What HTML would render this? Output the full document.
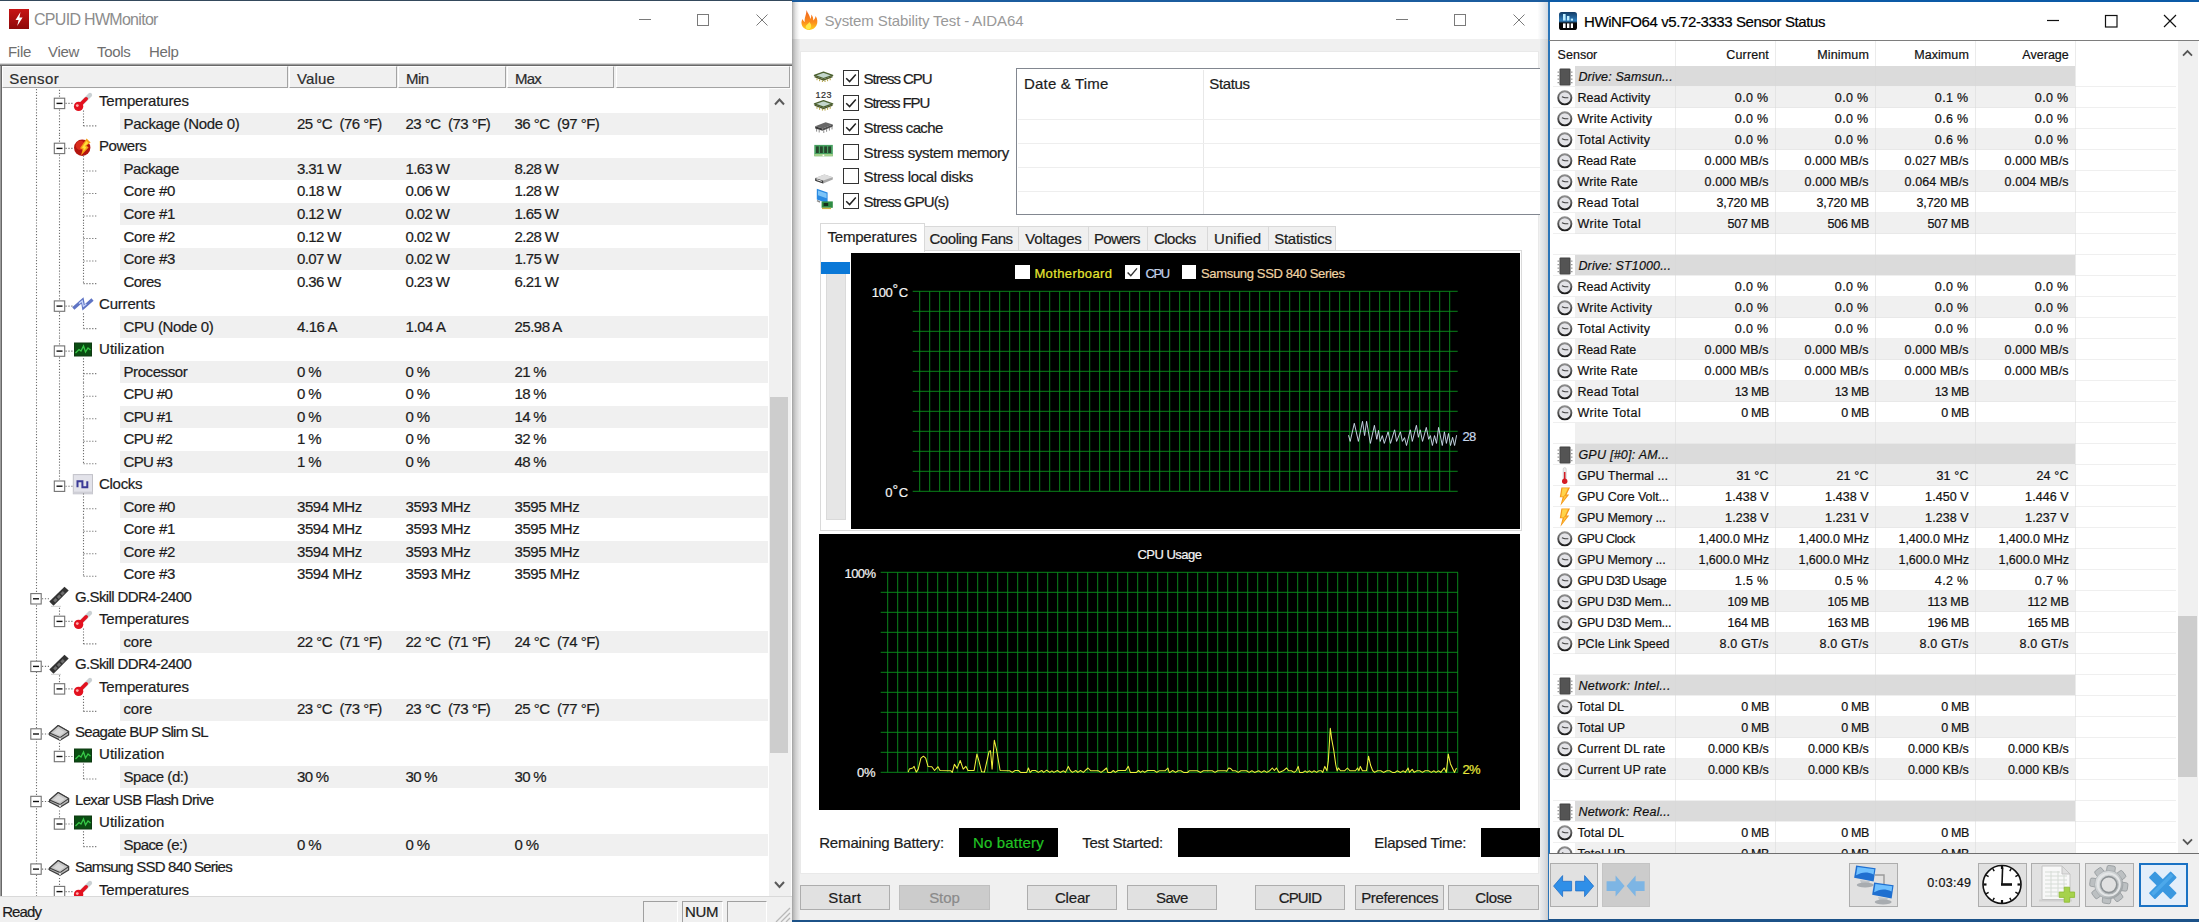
<!DOCTYPE html><html><head><meta charset="utf-8"><title>Monitoring</title><style>
*{box-sizing:border-box}
html,body{margin:0;padding:0}
body{width:2199px;height:922px;position:relative;overflow:hidden;background:#fff;font-family:"Liberation Sans",sans-serif;}
.a{position:absolute}
.t{position:absolute;white-space:nowrap;line-height:1;-webkit-text-stroke:0.2px}
.seg{font-size:15px;letter-spacing:-0.3px;color:#1c1c1c}
.hw{font-size:12.5px;color:#111}
.r{text-align:right}
svg{position:absolute;overflow:visible}
</style></head><body>
<div class="a" id="hwm" style="left:0;top:0;width:792px;height:922px;background:#fff;overflow:hidden">
<div class="a" style="left:0px;top:0px;width:792px;height:1px;background:#34495c;"></div>
<svg style="left:9px;top:9px" width="20" height="20" viewBox="0 0 20 20"><defs><linearGradient id="hmi" x1="0" y1="0" x2="0" y2="1"><stop offset="0" stop-color="#c81414"/><stop offset="1" stop-color="#8e0808"/></linearGradient></defs><rect width="20" height="20" fill="url(#hmi)"/><path d="M11.5 3 L6.5 11 H9.6 L8.2 17 L13.6 8.6 H10.4 Z" fill="#fff"/></svg>
<div class="t seg" style="left:34px;top:11.76px;font-size:16px;color:#8c8c8c;letter-spacing:-0.7px;-webkit-text-stroke:0">CPUID HWMonitor</div>
<svg style="left:0;top:0" width="792" height="40"><g stroke="#7a7a7a" stroke-width="1" fill="none"><path d="M639 19.5H651"/><rect x="697.5" y="14.5" width="11" height="11"/><path d="M756.5 14.5L767.5 25.5M767.5 14.5L756.5 25.5"/></g></svg>
<div class="t seg" style="left:8px;top:43.60px;font-size:15px;color:#6e6e6e;-webkit-text-stroke:0">File</div>
<div class="t seg" style="left:48px;top:43.60px;font-size:15px;color:#6e6e6e;-webkit-text-stroke:0">View</div>
<div class="t seg" style="left:97px;top:43.60px;font-size:15px;color:#6e6e6e;-webkit-text-stroke:0">Tools</div>
<div class="t seg" style="left:149px;top:43.60px;font-size:15px;color:#6e6e6e;-webkit-text-stroke:0">Help</div>
<div class="a" style="left:0px;top:63px;width:792px;height:1px;background:#d8d8d8;"></div>
<div class="a" style="left:0px;top:64px;width:792px;height:1px;background:#9c9c9c;"></div>
<div class="a" style="left:0px;top:65px;width:792px;height:1px;background:#686868;"></div>
<div class="a" style="left:0px;top:66px;width:1px;height:860px;background:#9c9c9c;"></div>
<div class="a" style="left:1px;top:66px;width:1px;height:860px;background:#686868;"></div>
<div class="a" style="left:2px;top:66px;width:788px;height:22px;background:#f0f0f0;"></div>
<div class="a" style="left:2px;top:66px;width:285.5px;height:22px;background:#f0f0f0;border-top:1px solid #fff;border-left:1px solid #fff;border-right:1px solid #a3a3a3;border-bottom:1px solid #a3a3a3"></div>
<div class="a" style="left:288.5px;top:66px;width:108.0px;height:22px;background:#f0f0f0;border-top:1px solid #fff;border-left:1px solid #fff;border-right:1px solid #a3a3a3;border-bottom:1px solid #a3a3a3"></div>
<div class="a" style="left:398px;top:66px;width:107.5px;height:22px;background:#f0f0f0;border-top:1px solid #fff;border-left:1px solid #fff;border-right:1px solid #a3a3a3;border-bottom:1px solid #a3a3a3"></div>
<div class="a" style="left:507px;top:66px;width:107px;height:22px;background:#f0f0f0;border-top:1px solid #fff;border-left:1px solid #fff;border-right:1px solid #a3a3a3;border-bottom:1px solid #a3a3a3"></div>
<div class="a" style="left:615.5px;top:66px;width:174.5px;height:22px;background:#f0f0f0;border-top:1px solid #fff;border-left:1px solid #fff;border-right:1px solid #a3a3a3;border-bottom:1px solid #a3a3a3"></div>
<div class="a" style="left:2px;top:88px;width:788px;height:1px;background:#fdfdfd;"></div>
<div class="t " style="left:9.3px;top:70.90px;font-size:15px;color:#2c2c2c;letter-spacing:0.361px">Sensor</div>
<div class="t " style="left:297px;top:70.90px;font-size:15px;color:#2c2c2c;letter-spacing:0.129px">Value</div>
<div class="t " style="left:406px;top:70.90px;font-size:15px;color:#2c2c2c;letter-spacing:-0.491px">Min</div>
<div class="t " style="left:515px;top:70.90px;font-size:15px;color:#2c2c2c;letter-spacing:-0.747px">Max</div>
<div class="a" style="left:769.2px;top:89px;width:21.5px;height:808px;background:#f0f0f0;"></div>
<div class="a" style="left:769.5px;top:396.7px;width:18.9px;height:356.3px;background:#cdcdcd;"></div>
<svg style="left:770px;top:89px" width="20" height="808"><g fill="none" stroke="#5a5a5a" stroke-width="2"><path d="M5 15.5L9.5 10.5L14 15.5"/><path d="M5 793L9.5 798L14 793"/></g></svg>
<div class="a" style="left:2px;top:89px;width:768px;height:808px;overflow:hidden">
<svg style="left:71px;top:2.5px" width="20" height="20" viewBox="0 0 20 20"><g><line x1="6" y1="14" x2="17" y2="3" stroke="#c9cfd2" stroke-width="4.2" stroke-linecap="round"/><line x1="6" y1="14" x2="13.2" y2="6.8" stroke="#e3111f" stroke-width="3.6" stroke-linecap="round"/><circle cx="5.6" cy="14.4" r="4.7" fill="#e3111f"/><circle cx="4.3" cy="13.6" r="1.4" fill="#ffb0b0"/></g></svg>
<div class="t " style="left:97px;top:4.40px;font-size:15px;color:#1c1c1c;letter-spacing:-0.152px">Temperatures</div>
<svg style="left:71px;top:47.5px" width="20" height="20" viewBox="0 0 20 20"><g><circle cx="9.2" cy="10.8" r="8.2" fill="#b3140e"/><circle cx="7.4" cy="8.4" r="4.6" fill="#e0301e" opacity=".85"/><path d="M13.6 1.4L17.6 5.4L13.4 8.6L15.6 10.4L8 18.4L9.6 12.6L7 11.2Z" fill="#f6a21a"/><path d="M13.4 4L15.4 6L11.8 9L13.4 10.4L10 14.6L10.8 11.6L9 10.4Z" fill="#ffe23a"/></g></svg>
<div class="t " style="left:97px;top:49.44px;font-size:15px;color:#1c1c1c;letter-spacing:-0.453px">Powers</div>
<svg style="left:71px;top:205.2px" width="20" height="20" viewBox="0 0 20 20"><g fill="none" stroke-linejoin="miter"><path d="M0.3 14.6L9.4 6.4L10.6 13.4L19.5 5.6" stroke="#5f74c4" stroke-width="3.3"/><path d="M6 9.6L9.2 7L10.4 12.4L13.4 10" stroke="#c6d4fa" stroke-width="1.3"/></g></svg>
<div class="t " style="left:97px;top:207.08px;font-size:15px;color:#1c1c1c;letter-spacing:-0.190px">Currents</div>
<svg style="left:71px;top:250.2px" width="20" height="20" viewBox="0 0 20 20"><g><rect x="1" y="3.5" width="18" height="14" fill="#0e3a12"/><rect x="2" y="4.5" width="16" height="12" fill="#0a4d12"/><path d="M2.5 14L6 10.5L8 12L10.5 7L12.5 13L15 9L17.5 11" fill="none" stroke="#38c848" stroke-width="1.3"/></g></svg>
<div class="t " style="left:97px;top:252.12px;font-size:15px;color:#1c1c1c;letter-spacing:0.043px">Utilization</div>
<svg style="left:71px;top:385.3px" width="20" height="20" viewBox="0 0 20 20"><g><rect x="0.3" y="0.6" width="19.2" height="19.2" fill="#e3e3ea" stroke="#c2c2c8"/><rect x="0.3" y="17.6" width="19.2" height="2.2" fill="#cfcfd6"/><path d="M4.5 13.2V7.2H9.4V13.2H14.3V7.2" fill="none" stroke="#3b3a96" stroke-width="2"/></g></svg>
<div class="t " style="left:97px;top:387.24px;font-size:15px;color:#1c1c1c;letter-spacing:-0.285px">Clocks</div>
<svg style="left:47px;top:497.4px" width="21" height="20" viewBox="0 0 21 20"><g><path d="M0.3 15.6L15.5 0.8L19.7 4.6L4.5 19.8Z" fill="#333"/><path d="M4.2 14.4L6.6 12L8.6 14L6.2 16.4ZM7.8 10.9L10.2 8.5L12.2 10.5L9.8 12.9ZM11.4 7.4L13.8 5L15.8 7L13.4 9.4Z" fill="#6e6e6e"/><path d="M2 20.3H12" stroke="#cfcfcf" stroke-width="1"/></g></svg>
<div class="t " style="left:73px;top:499.84px;font-size:15px;color:#1c1c1c;letter-spacing:-0.624px">G.Skill DDR4-2400</div>
<svg style="left:71px;top:520.5px" width="20" height="20" viewBox="0 0 20 20"><g><line x1="6" y1="14" x2="17" y2="3" stroke="#c9cfd2" stroke-width="4.2" stroke-linecap="round"/><line x1="6" y1="14" x2="13.2" y2="6.8" stroke="#e3111f" stroke-width="3.6" stroke-linecap="round"/><circle cx="5.6" cy="14.4" r="4.7" fill="#e3111f"/><circle cx="4.3" cy="13.6" r="1.4" fill="#ffb0b0"/></g></svg>
<div class="t " style="left:97px;top:522.36px;font-size:15px;color:#1c1c1c;letter-spacing:-0.152px">Temperatures</div>
<svg style="left:47px;top:565.0px" width="21" height="20" viewBox="0 0 21 20"><g><path d="M0.3 15.6L15.5 0.8L19.7 4.6L4.5 19.8Z" fill="#333"/><path d="M4.2 14.4L6.6 12L8.6 14L6.2 16.4ZM7.8 10.9L10.2 8.5L12.2 10.5L9.8 12.9ZM11.4 7.4L13.8 5L15.8 7L13.4 9.4Z" fill="#6e6e6e"/><path d="M2 20.3H12" stroke="#cfcfcf" stroke-width="1"/></g></svg>
<div class="t " style="left:73px;top:567.40px;font-size:15px;color:#1c1c1c;letter-spacing:-0.624px">G.Skill DDR4-2400</div>
<svg style="left:71px;top:588.0px" width="20" height="20" viewBox="0 0 20 20"><g><line x1="6" y1="14" x2="17" y2="3" stroke="#c9cfd2" stroke-width="4.2" stroke-linecap="round"/><line x1="6" y1="14" x2="13.2" y2="6.8" stroke="#e3111f" stroke-width="3.6" stroke-linecap="round"/><circle cx="5.6" cy="14.4" r="4.7" fill="#e3111f"/><circle cx="4.3" cy="13.6" r="1.4" fill="#ffb0b0"/></g></svg>
<div class="t " style="left:97px;top:589.92px;font-size:15px;color:#1c1c1c;letter-spacing:-0.152px">Temperatures</div>
<svg style="left:47px;top:632.6px" width="21" height="20" viewBox="0 0 21 20"><g stroke-linejoin="round"><path d="M0.6 11.1L9.1 3.6L19.6 9.6V13L11 18.2L0.6 13Z" fill="#b9b9b9" stroke="#3c3c3c" stroke-width="1.3"/><path d="M0.6 11.1L9.1 3.6L19.6 9.6L11 15.6Z" fill="#c6c6c6" stroke="#3c3c3c" stroke-width="1.1"/><path d="M4.5 10.8L9.3 6.4L15.6 9.9L10.8 13.4Z" fill="#d9d9d9"/><path d="M11 15.8V18" stroke="#f4f4f4" stroke-width="1.4"/></g></svg>
<div class="t " style="left:73px;top:634.96px;font-size:15px;color:#1c1c1c;letter-spacing:-0.720px">Seagate BUP Slim SL</div>
<svg style="left:71px;top:655.6px" width="20" height="20" viewBox="0 0 20 20"><g><rect x="1" y="3.5" width="18" height="14" fill="#0e3a12"/><rect x="2" y="4.5" width="16" height="12" fill="#0a4d12"/><path d="M2.5 14L6 10.5L8 12L10.5 7L12.5 13L15 9L17.5 11" fill="none" stroke="#38c848" stroke-width="1.3"/></g></svg>
<div class="t " style="left:97px;top:657.48px;font-size:15px;color:#1c1c1c;letter-spacing:0.043px">Utilization</div>
<svg style="left:47px;top:700.1px" width="21" height="20" viewBox="0 0 21 20"><g stroke-linejoin="round"><path d="M0.6 11.1L9.1 3.6L19.6 9.6V13L11 18.2L0.6 13Z" fill="#b9b9b9" stroke="#3c3c3c" stroke-width="1.3"/><path d="M0.6 11.1L9.1 3.6L19.6 9.6L11 15.6Z" fill="#c6c6c6" stroke="#3c3c3c" stroke-width="1.1"/><path d="M4.5 10.8L9.3 6.4L15.6 9.9L10.8 13.4Z" fill="#d9d9d9"/><path d="M11 15.8V18" stroke="#f4f4f4" stroke-width="1.4"/></g></svg>
<div class="t " style="left:73px;top:702.52px;font-size:15px;color:#1c1c1c;letter-spacing:-0.674px">Lexar USB Flash Drive</div>
<svg style="left:71px;top:723.1px" width="20" height="20" viewBox="0 0 20 20"><g><rect x="1" y="3.5" width="18" height="14" fill="#0e3a12"/><rect x="2" y="4.5" width="16" height="12" fill="#0a4d12"/><path d="M2.5 14L6 10.5L8 12L10.5 7L12.5 13L15 9L17.5 11" fill="none" stroke="#38c848" stroke-width="1.3"/></g></svg>
<div class="t " style="left:97px;top:725.04px;font-size:15px;color:#1c1c1c;letter-spacing:0.043px">Utilization</div>
<svg style="left:47px;top:767.7px" width="21" height="20" viewBox="0 0 21 20"><g stroke-linejoin="round"><path d="M0.6 11.1L9.1 3.6L19.6 9.6V13L11 18.2L0.6 13Z" fill="#b9b9b9" stroke="#3c3c3c" stroke-width="1.3"/><path d="M0.6 11.1L9.1 3.6L19.6 9.6L11 15.6Z" fill="#c6c6c6" stroke="#3c3c3c" stroke-width="1.1"/><path d="M4.5 10.8L9.3 6.4L15.6 9.9L10.8 13.4Z" fill="#d9d9d9"/><path d="M11 15.8V18" stroke="#f4f4f4" stroke-width="1.4"/></g></svg>
<div class="t " style="left:73px;top:770.08px;font-size:15px;color:#1c1c1c;letter-spacing:-0.790px">Samsung SSD 840 Series</div>
<svg style="left:71px;top:790.7px" width="20" height="20" viewBox="0 0 20 20"><g><line x1="6" y1="14" x2="17" y2="3" stroke="#c9cfd2" stroke-width="4.2" stroke-linecap="round"/><line x1="6" y1="14" x2="13.2" y2="6.8" stroke="#e3111f" stroke-width="3.6" stroke-linecap="round"/><circle cx="5.6" cy="14.4" r="4.7" fill="#e3111f"/><circle cx="4.3" cy="13.6" r="1.4" fill="#ffb0b0"/></g></svg>
<div class="t " style="left:97px;top:792.60px;font-size:15px;color:#1c1c1c;letter-spacing:-0.152px">Temperatures</div>
<div class="a" style="left:118px;top:24.1px;width:648px;height:22px;background:#f0f0f0;"></div>
<div class="a" style="left:118px;top:69.2px;width:648px;height:22px;background:#f0f0f0;"></div>
<div class="a" style="left:118px;top:114.2px;width:648px;height:22px;background:#f0f0f0;"></div>
<div class="a" style="left:118px;top:159.2px;width:648px;height:22px;background:#f0f0f0;"></div>
<div class="a" style="left:118px;top:226.8px;width:648px;height:22px;background:#f0f0f0;"></div>
<div class="a" style="left:118px;top:271.8px;width:648px;height:22px;background:#f0f0f0;"></div>
<div class="a" style="left:118px;top:316.9px;width:648px;height:22px;background:#f0f0f0;"></div>
<div class="a" style="left:118px;top:361.9px;width:648px;height:22px;background:#f0f0f0;"></div>
<div class="a" style="left:118px;top:407.0px;width:648px;height:22px;background:#f0f0f0;"></div>
<div class="a" style="left:118px;top:452.0px;width:648px;height:22px;background:#f0f0f0;"></div>
<div class="a" style="left:118px;top:542.1px;width:648px;height:22px;background:#f0f0f0;"></div>
<div class="a" style="left:118px;top:609.6px;width:648px;height:22px;background:#f0f0f0;"></div>
<div class="a" style="left:118px;top:677.2px;width:648px;height:22px;background:#f0f0f0;"></div>
<div class="a" style="left:118px;top:744.8px;width:648px;height:22px;background:#f0f0f0;"></div>
<div class="t " style="left:121.5px;top:26.92px;font-size:15px;color:#1c1c1c;letter-spacing:-0.307px">Package (Node 0)</div>
<div class="t " style="left:295px;top:26.92px;font-size:15px;color:#1c1c1c;letter-spacing:-0.517px">25 °C&nbsp; (76 °F)</div>
<div class="t " style="left:403.5px;top:26.92px;font-size:15px;color:#1c1c1c;letter-spacing:-0.517px">23 °C&nbsp; (73 °F)</div>
<div class="t " style="left:512.5px;top:26.92px;font-size:15px;color:#1c1c1c;letter-spacing:-0.517px">36 °C&nbsp; (97 °F)</div>
<div class="t " style="left:121.5px;top:71.96px;font-size:15px;color:#1c1c1c;letter-spacing:-0.440px">Package</div>
<div class="t " style="left:295px;top:71.96px;font-size:15px;color:#1c1c1c;letter-spacing:-0.637px">3.31 W</div>
<div class="t " style="left:403.5px;top:71.96px;font-size:15px;color:#1c1c1c;letter-spacing:-0.637px">1.63 W</div>
<div class="t " style="left:512.5px;top:71.96px;font-size:15px;color:#1c1c1c;letter-spacing:-0.637px">8.28 W</div>
<div class="t " style="left:121.5px;top:94.48px;font-size:15px;color:#1c1c1c;letter-spacing:-0.239px">Core #0</div>
<div class="t " style="left:295px;top:94.48px;font-size:15px;color:#1c1c1c;letter-spacing:-0.637px">0.18 W</div>
<div class="t " style="left:403.5px;top:94.48px;font-size:15px;color:#1c1c1c;letter-spacing:-0.637px">0.06 W</div>
<div class="t " style="left:512.5px;top:94.48px;font-size:15px;color:#1c1c1c;letter-spacing:-0.637px">1.28 W</div>
<div class="t " style="left:121.5px;top:117.00px;font-size:15px;color:#1c1c1c;letter-spacing:-0.239px">Core #1</div>
<div class="t " style="left:295px;top:117.00px;font-size:15px;color:#1c1c1c;letter-spacing:-0.637px">0.12 W</div>
<div class="t " style="left:403.5px;top:117.00px;font-size:15px;color:#1c1c1c;letter-spacing:-0.637px">0.02 W</div>
<div class="t " style="left:512.5px;top:117.00px;font-size:15px;color:#1c1c1c;letter-spacing:-0.637px">1.65 W</div>
<div class="t " style="left:121.5px;top:139.52px;font-size:15px;color:#1c1c1c;letter-spacing:-0.239px">Core #2</div>
<div class="t " style="left:295px;top:139.52px;font-size:15px;color:#1c1c1c;letter-spacing:-0.637px">0.12 W</div>
<div class="t " style="left:403.5px;top:139.52px;font-size:15px;color:#1c1c1c;letter-spacing:-0.637px">0.02 W</div>
<div class="t " style="left:512.5px;top:139.52px;font-size:15px;color:#1c1c1c;letter-spacing:-0.637px">2.28 W</div>
<div class="t " style="left:121.5px;top:162.04px;font-size:15px;color:#1c1c1c;letter-spacing:-0.239px">Core #3</div>
<div class="t " style="left:295px;top:162.04px;font-size:15px;color:#1c1c1c;letter-spacing:-0.637px">0.07 W</div>
<div class="t " style="left:403.5px;top:162.04px;font-size:15px;color:#1c1c1c;letter-spacing:-0.637px">0.02 W</div>
<div class="t " style="left:512.5px;top:162.04px;font-size:15px;color:#1c1c1c;letter-spacing:-0.637px">1.75 W</div>
<div class="t " style="left:121.5px;top:184.56px;font-size:15px;color:#1c1c1c;letter-spacing:-0.583px">Cores</div>
<div class="t " style="left:295px;top:184.56px;font-size:15px;color:#1c1c1c;letter-spacing:-0.637px">0.36 W</div>
<div class="t " style="left:403.5px;top:184.56px;font-size:15px;color:#1c1c1c;letter-spacing:-0.637px">0.23 W</div>
<div class="t " style="left:512.5px;top:184.56px;font-size:15px;color:#1c1c1c;letter-spacing:-0.637px">6.21 W</div>
<div class="t " style="left:121.5px;top:229.60px;font-size:15px;color:#1c1c1c;letter-spacing:-0.359px">CPU (Node 0)</div>
<div class="t " style="left:295px;top:229.60px;font-size:15px;color:#1c1c1c;letter-spacing:-0.424px">4.16 A</div>
<div class="t " style="left:403.5px;top:229.60px;font-size:15px;color:#1c1c1c;letter-spacing:-0.424px">1.04 A</div>
<div class="t " style="left:512.5px;top:229.60px;font-size:15px;color:#1c1c1c;letter-spacing:-0.512px">25.98 A</div>
<div class="t " style="left:121.5px;top:274.64px;font-size:15px;color:#1c1c1c;letter-spacing:-0.425px">Processor</div>
<div class="t " style="left:295px;top:274.64px;font-size:15px;color:#1c1c1c;letter-spacing:-0.616px">0 %</div>
<div class="t " style="left:403.5px;top:274.64px;font-size:15px;color:#1c1c1c;letter-spacing:-0.616px">0 %</div>
<div class="t " style="left:512.5px;top:274.64px;font-size:15px;color:#1c1c1c;letter-spacing:-0.673px">21 %</div>
<div class="t " style="left:121.5px;top:297.16px;font-size:15px;color:#1c1c1c;letter-spacing:-0.637px">CPU #0</div>
<div class="t " style="left:295px;top:297.16px;font-size:15px;color:#1c1c1c;letter-spacing:-0.616px">0 %</div>
<div class="t " style="left:403.5px;top:297.16px;font-size:15px;color:#1c1c1c;letter-spacing:-0.616px">0 %</div>
<div class="t " style="left:512.5px;top:297.16px;font-size:15px;color:#1c1c1c;letter-spacing:-0.673px">18 %</div>
<div class="t " style="left:121.5px;top:319.68px;font-size:15px;color:#1c1c1c;letter-spacing:-0.637px">CPU #1</div>
<div class="t " style="left:295px;top:319.68px;font-size:15px;color:#1c1c1c;letter-spacing:-0.616px">0 %</div>
<div class="t " style="left:403.5px;top:319.68px;font-size:15px;color:#1c1c1c;letter-spacing:-0.616px">0 %</div>
<div class="t " style="left:512.5px;top:319.68px;font-size:15px;color:#1c1c1c;letter-spacing:-0.673px">14 %</div>
<div class="t " style="left:121.5px;top:342.20px;font-size:15px;color:#1c1c1c;letter-spacing:-0.637px">CPU #2</div>
<div class="t " style="left:295px;top:342.20px;font-size:15px;color:#1c1c1c;letter-spacing:-0.616px">1 %</div>
<div class="t " style="left:403.5px;top:342.20px;font-size:15px;color:#1c1c1c;letter-spacing:-0.616px">0 %</div>
<div class="t " style="left:512.5px;top:342.20px;font-size:15px;color:#1c1c1c;letter-spacing:-0.673px">32 %</div>
<div class="t " style="left:121.5px;top:364.72px;font-size:15px;color:#1c1c1c;letter-spacing:-0.637px">CPU #3</div>
<div class="t " style="left:295px;top:364.72px;font-size:15px;color:#1c1c1c;letter-spacing:-0.616px">1 %</div>
<div class="t " style="left:403.5px;top:364.72px;font-size:15px;color:#1c1c1c;letter-spacing:-0.616px">0 %</div>
<div class="t " style="left:512.5px;top:364.72px;font-size:15px;color:#1c1c1c;letter-spacing:-0.673px">48 %</div>
<div class="t " style="left:121.5px;top:409.76px;font-size:15px;color:#1c1c1c;letter-spacing:-0.239px">Core #0</div>
<div class="t " style="left:295px;top:409.76px;font-size:15px;color:#1c1c1c;letter-spacing:-0.446px">3594 MHz</div>
<div class="t " style="left:403.5px;top:409.76px;font-size:15px;color:#1c1c1c;letter-spacing:-0.446px">3593 MHz</div>
<div class="t " style="left:512.5px;top:409.76px;font-size:15px;color:#1c1c1c;letter-spacing:-0.446px">3595 MHz</div>
<div class="t " style="left:121.5px;top:432.28px;font-size:15px;color:#1c1c1c;letter-spacing:-0.239px">Core #1</div>
<div class="t " style="left:295px;top:432.28px;font-size:15px;color:#1c1c1c;letter-spacing:-0.446px">3594 MHz</div>
<div class="t " style="left:403.5px;top:432.28px;font-size:15px;color:#1c1c1c;letter-spacing:-0.446px">3593 MHz</div>
<div class="t " style="left:512.5px;top:432.28px;font-size:15px;color:#1c1c1c;letter-spacing:-0.446px">3595 MHz</div>
<div class="t " style="left:121.5px;top:454.80px;font-size:15px;color:#1c1c1c;letter-spacing:-0.239px">Core #2</div>
<div class="t " style="left:295px;top:454.80px;font-size:15px;color:#1c1c1c;letter-spacing:-0.446px">3594 MHz</div>
<div class="t " style="left:403.5px;top:454.80px;font-size:15px;color:#1c1c1c;letter-spacing:-0.446px">3593 MHz</div>
<div class="t " style="left:512.5px;top:454.80px;font-size:15px;color:#1c1c1c;letter-spacing:-0.446px">3595 MHz</div>
<div class="t " style="left:121.5px;top:477.32px;font-size:15px;color:#1c1c1c;letter-spacing:-0.239px">Core #3</div>
<div class="t " style="left:295px;top:477.32px;font-size:15px;color:#1c1c1c;letter-spacing:-0.446px">3594 MHz</div>
<div class="t " style="left:403.5px;top:477.32px;font-size:15px;color:#1c1c1c;letter-spacing:-0.446px">3593 MHz</div>
<div class="t " style="left:512.5px;top:477.32px;font-size:15px;color:#1c1c1c;letter-spacing:-0.446px">3595 MHz</div>
<div class="t " style="left:121.5px;top:544.88px;font-size:15px;color:#1c1c1c;letter-spacing:-0.146px">core</div>
<div class="t " style="left:295px;top:544.88px;font-size:15px;color:#1c1c1c;letter-spacing:-0.517px">22 °C&nbsp; (71 °F)</div>
<div class="t " style="left:403.5px;top:544.88px;font-size:15px;color:#1c1c1c;letter-spacing:-0.517px">22 °C&nbsp; (71 °F)</div>
<div class="t " style="left:512.5px;top:544.88px;font-size:15px;color:#1c1c1c;letter-spacing:-0.517px">24 °C&nbsp; (74 °F)</div>
<div class="t " style="left:121.5px;top:612.44px;font-size:15px;color:#1c1c1c;letter-spacing:-0.146px">core</div>
<div class="t " style="left:295px;top:612.44px;font-size:15px;color:#1c1c1c;letter-spacing:-0.517px">23 °C&nbsp; (73 °F)</div>
<div class="t " style="left:403.5px;top:612.44px;font-size:15px;color:#1c1c1c;letter-spacing:-0.517px">23 °C&nbsp; (73 °F)</div>
<div class="t " style="left:512.5px;top:612.44px;font-size:15px;color:#1c1c1c;letter-spacing:-0.517px">25 °C&nbsp; (77 °F)</div>
<div class="t " style="left:121.5px;top:680.00px;font-size:15px;color:#1c1c1c;letter-spacing:-0.471px">Space (d:)</div>
<div class="t " style="left:295px;top:680.00px;font-size:15px;color:#1c1c1c;letter-spacing:-0.673px">30 %</div>
<div class="t " style="left:403.5px;top:680.00px;font-size:15px;color:#1c1c1c;letter-spacing:-0.673px">30 %</div>
<div class="t " style="left:512.5px;top:680.00px;font-size:15px;color:#1c1c1c;letter-spacing:-0.673px">30 %</div>
<div class="t " style="left:121.5px;top:747.56px;font-size:15px;color:#1c1c1c;letter-spacing:-0.581px">Space (e:)</div>
<div class="t " style="left:295px;top:747.56px;font-size:15px;color:#1c1c1c;letter-spacing:-0.616px">0 %</div>
<div class="t " style="left:403.5px;top:747.56px;font-size:15px;color:#1c1c1c;letter-spacing:-0.616px">0 %</div>
<div class="t " style="left:512.5px;top:747.56px;font-size:15px;color:#1c1c1c;letter-spacing:-0.616px">0 %</div>
<svg style="left:0;top:0" width="768" height="808"><path d="M34.5 0V808" stroke="#707070" stroke-width="1.1" stroke-dasharray="1.2 1.7" fill="none"/><path d="M57.5 0.8V9.0" stroke="#707070" stroke-width="1.1" stroke-dasharray="1.2 1.7" fill="none"/><path d="M63.5 14.4H71" stroke="#707070" stroke-width="1.1" stroke-dasharray="1.2 1.7" fill="none"/><rect x="52.3" y="9.2" width="10.4" height="10.4" fill="#fff" stroke="#727272" stroke-width="1.1"/><path d="M54.5 14.4h6" stroke="#111" stroke-width="1.4"/><path d="M57.5 20.5V45.8" stroke="#707070" stroke-width="1.1" stroke-dasharray="1.2 1.7" fill="none"/><path d="M81.5 21.5V36.9" stroke="#707070" stroke-width="1.1" stroke-dasharray="1.2 1.7" fill="none"/><path d="M81.5 36.9H95" stroke="#707070" stroke-width="1.1" stroke-dasharray="1.2 1.7" fill="none"/><path d="M57.5 45.8V54.0" stroke="#707070" stroke-width="1.1" stroke-dasharray="1.2 1.7" fill="none"/><path d="M63.5 59.4H71" stroke="#707070" stroke-width="1.1" stroke-dasharray="1.2 1.7" fill="none"/><rect x="52.3" y="54.2" width="10.4" height="10.4" fill="#fff" stroke="#727272" stroke-width="1.1"/><path d="M54.5 59.4h6" stroke="#111" stroke-width="1.4"/><path d="M57.5 65.5V203.4" stroke="#707070" stroke-width="1.1" stroke-dasharray="1.2 1.7" fill="none"/><path d="M81.5 66.6V90.8" stroke="#707070" stroke-width="1.1" stroke-dasharray="1.2 1.7" fill="none"/><path d="M81.5 82.0H95" stroke="#707070" stroke-width="1.1" stroke-dasharray="1.2 1.7" fill="none"/><path d="M81.5 90.8V113.3" stroke="#707070" stroke-width="1.1" stroke-dasharray="1.2 1.7" fill="none"/><path d="M81.5 104.5H95" stroke="#707070" stroke-width="1.1" stroke-dasharray="1.2 1.7" fill="none"/><path d="M81.5 113.3V135.8" stroke="#707070" stroke-width="1.1" stroke-dasharray="1.2 1.7" fill="none"/><path d="M81.5 127.0H95" stroke="#707070" stroke-width="1.1" stroke-dasharray="1.2 1.7" fill="none"/><path d="M81.5 135.9V158.4" stroke="#707070" stroke-width="1.1" stroke-dasharray="1.2 1.7" fill="none"/><path d="M81.5 149.5H95" stroke="#707070" stroke-width="1.1" stroke-dasharray="1.2 1.7" fill="none"/><path d="M81.5 158.4V180.9" stroke="#707070" stroke-width="1.1" stroke-dasharray="1.2 1.7" fill="none"/><path d="M81.5 172.0H95" stroke="#707070" stroke-width="1.1" stroke-dasharray="1.2 1.7" fill="none"/><path d="M81.5 180.9V194.6" stroke="#707070" stroke-width="1.1" stroke-dasharray="1.2 1.7" fill="none"/><path d="M81.5 194.6H95" stroke="#707070" stroke-width="1.1" stroke-dasharray="1.2 1.7" fill="none"/><path d="M57.5 203.4V211.7" stroke="#707070" stroke-width="1.1" stroke-dasharray="1.2 1.7" fill="none"/><path d="M63.5 217.1H71" stroke="#707070" stroke-width="1.1" stroke-dasharray="1.2 1.7" fill="none"/><rect x="52.3" y="211.9" width="10.4" height="10.4" fill="#fff" stroke="#727272" stroke-width="1.1"/><path d="M54.5 217.1h6" stroke="#111" stroke-width="1.4"/><path d="M57.5 223.2V248.5" stroke="#707070" stroke-width="1.1" stroke-dasharray="1.2 1.7" fill="none"/><path d="M81.5 224.2V239.6" stroke="#707070" stroke-width="1.1" stroke-dasharray="1.2 1.7" fill="none"/><path d="M81.5 239.6H95" stroke="#707070" stroke-width="1.1" stroke-dasharray="1.2 1.7" fill="none"/><path d="M57.5 248.5V256.7" stroke="#707070" stroke-width="1.1" stroke-dasharray="1.2 1.7" fill="none"/><path d="M63.5 262.1H71" stroke="#707070" stroke-width="1.1" stroke-dasharray="1.2 1.7" fill="none"/><rect x="52.3" y="256.9" width="10.4" height="10.4" fill="#fff" stroke="#727272" stroke-width="1.1"/><path d="M54.5 262.1h6" stroke="#111" stroke-width="1.4"/><path d="M57.5 268.2V383.6" stroke="#707070" stroke-width="1.1" stroke-dasharray="1.2 1.7" fill="none"/><path d="M81.5 269.2V293.5" stroke="#707070" stroke-width="1.1" stroke-dasharray="1.2 1.7" fill="none"/><path d="M81.5 284.6H95" stroke="#707070" stroke-width="1.1" stroke-dasharray="1.2 1.7" fill="none"/><path d="M81.5 293.5V316.0" stroke="#707070" stroke-width="1.1" stroke-dasharray="1.2 1.7" fill="none"/><path d="M81.5 307.2H95" stroke="#707070" stroke-width="1.1" stroke-dasharray="1.2 1.7" fill="none"/><path d="M81.5 316.0V338.5" stroke="#707070" stroke-width="1.1" stroke-dasharray="1.2 1.7" fill="none"/><path d="M81.5 329.7H95" stroke="#707070" stroke-width="1.1" stroke-dasharray="1.2 1.7" fill="none"/><path d="M81.5 338.6V361.1" stroke="#707070" stroke-width="1.1" stroke-dasharray="1.2 1.7" fill="none"/><path d="M81.5 352.2H95" stroke="#707070" stroke-width="1.1" stroke-dasharray="1.2 1.7" fill="none"/><path d="M81.5 361.1V374.7" stroke="#707070" stroke-width="1.1" stroke-dasharray="1.2 1.7" fill="none"/><path d="M81.5 374.7H95" stroke="#707070" stroke-width="1.1" stroke-dasharray="1.2 1.7" fill="none"/><path d="M57.5 383.6V391.8" stroke="#707070" stroke-width="1.1" stroke-dasharray="1.2 1.7" fill="none"/><path d="M63.5 397.2H71" stroke="#707070" stroke-width="1.1" stroke-dasharray="1.2 1.7" fill="none"/><rect x="52.3" y="392.0" width="10.4" height="10.4" fill="#fff" stroke="#727272" stroke-width="1.1"/><path d="M54.5 397.2h6" stroke="#111" stroke-width="1.4"/><path d="M81.5 404.4V428.6" stroke="#707070" stroke-width="1.1" stroke-dasharray="1.2 1.7" fill="none"/><path d="M81.5 419.8H95" stroke="#707070" stroke-width="1.1" stroke-dasharray="1.2 1.7" fill="none"/><path d="M81.5 428.6V451.1" stroke="#707070" stroke-width="1.1" stroke-dasharray="1.2 1.7" fill="none"/><path d="M81.5 442.3H95" stroke="#707070" stroke-width="1.1" stroke-dasharray="1.2 1.7" fill="none"/><path d="M81.5 451.1V473.6" stroke="#707070" stroke-width="1.1" stroke-dasharray="1.2 1.7" fill="none"/><path d="M81.5 464.8H95" stroke="#707070" stroke-width="1.1" stroke-dasharray="1.2 1.7" fill="none"/><path d="M81.5 473.7V487.3" stroke="#707070" stroke-width="1.1" stroke-dasharray="1.2 1.7" fill="none"/><path d="M81.5 487.3H95" stroke="#707070" stroke-width="1.1" stroke-dasharray="1.2 1.7" fill="none"/><path d="M40 509.8H47" stroke="#707070" stroke-width="1.1" stroke-dasharray="1.2 1.7" fill="none"/><rect x="28.8" y="504.6" width="10.4" height="10.4" fill="#fff" stroke="#727272" stroke-width="1.1"/><path d="M31.0 509.8h6" stroke="#111" stroke-width="1.4"/><path d="M57.5 518.7V527.0" stroke="#707070" stroke-width="1.1" stroke-dasharray="1.2 1.7" fill="none"/><path d="M63.5 532.4H71" stroke="#707070" stroke-width="1.1" stroke-dasharray="1.2 1.7" fill="none"/><rect x="52.3" y="527.2" width="10.4" height="10.4" fill="#fff" stroke="#727272" stroke-width="1.1"/><path d="M54.5 532.4h6" stroke="#111" stroke-width="1.4"/><path d="M81.5 539.5V554.9" stroke="#707070" stroke-width="1.1" stroke-dasharray="1.2 1.7" fill="none"/><path d="M81.5 554.9H95" stroke="#707070" stroke-width="1.1" stroke-dasharray="1.2 1.7" fill="none"/><path d="M40 577.4H47" stroke="#707070" stroke-width="1.1" stroke-dasharray="1.2 1.7" fill="none"/><rect x="28.8" y="572.2" width="10.4" height="10.4" fill="#fff" stroke="#727272" stroke-width="1.1"/><path d="M31.0 577.4h6" stroke="#111" stroke-width="1.4"/><path d="M57.5 586.3V594.5" stroke="#707070" stroke-width="1.1" stroke-dasharray="1.2 1.7" fill="none"/><path d="M63.5 599.9H71" stroke="#707070" stroke-width="1.1" stroke-dasharray="1.2 1.7" fill="none"/><rect x="52.3" y="594.7" width="10.4" height="10.4" fill="#fff" stroke="#727272" stroke-width="1.1"/><path d="M54.5 599.9h6" stroke="#111" stroke-width="1.4"/><path d="M81.5 607.0V622.4" stroke="#707070" stroke-width="1.1" stroke-dasharray="1.2 1.7" fill="none"/><path d="M81.5 622.4H95" stroke="#707070" stroke-width="1.1" stroke-dasharray="1.2 1.7" fill="none"/><path d="M40 645.0H47" stroke="#707070" stroke-width="1.1" stroke-dasharray="1.2 1.7" fill="none"/><rect x="28.8" y="639.8" width="10.4" height="10.4" fill="#fff" stroke="#727272" stroke-width="1.1"/><path d="M31.0 645.0h6" stroke="#111" stroke-width="1.4"/><path d="M57.5 653.8V662.1" stroke="#707070" stroke-width="1.1" stroke-dasharray="1.2 1.7" fill="none"/><path d="M63.5 667.5H71" stroke="#707070" stroke-width="1.1" stroke-dasharray="1.2 1.7" fill="none"/><rect x="52.3" y="662.3" width="10.4" height="10.4" fill="#fff" stroke="#727272" stroke-width="1.1"/><path d="M54.5 667.5h6" stroke="#111" stroke-width="1.4"/><path d="M81.5 674.6V690.0" stroke="#707070" stroke-width="1.1" stroke-dasharray="1.2 1.7" fill="none"/><path d="M81.5 690.0H95" stroke="#707070" stroke-width="1.1" stroke-dasharray="1.2 1.7" fill="none"/><path d="M40 712.5H47" stroke="#707070" stroke-width="1.1" stroke-dasharray="1.2 1.7" fill="none"/><rect x="28.8" y="707.3" width="10.4" height="10.4" fill="#fff" stroke="#727272" stroke-width="1.1"/><path d="M31.0 712.5h6" stroke="#111" stroke-width="1.4"/><path d="M57.5 721.4V729.6" stroke="#707070" stroke-width="1.1" stroke-dasharray="1.2 1.7" fill="none"/><path d="M63.5 735.0H71" stroke="#707070" stroke-width="1.1" stroke-dasharray="1.2 1.7" fill="none"/><rect x="52.3" y="729.8" width="10.4" height="10.4" fill="#fff" stroke="#727272" stroke-width="1.1"/><path d="M54.5 735.0h6" stroke="#111" stroke-width="1.4"/><path d="M81.5 742.2V757.6" stroke="#707070" stroke-width="1.1" stroke-dasharray="1.2 1.7" fill="none"/><path d="M81.5 757.6H95" stroke="#707070" stroke-width="1.1" stroke-dasharray="1.2 1.7" fill="none"/><path d="M40 780.1H47" stroke="#707070" stroke-width="1.1" stroke-dasharray="1.2 1.7" fill="none"/><rect x="28.8" y="774.9" width="10.4" height="10.4" fill="#fff" stroke="#727272" stroke-width="1.1"/><path d="M31.0 780.1h6" stroke="#111" stroke-width="1.4"/><path d="M57.5 788.9V797.2" stroke="#707070" stroke-width="1.1" stroke-dasharray="1.2 1.7" fill="none"/><path d="M63.5 802.6H71" stroke="#707070" stroke-width="1.1" stroke-dasharray="1.2 1.7" fill="none"/><rect x="52.3" y="797.4" width="10.4" height="10.4" fill="#fff" stroke="#727272" stroke-width="1.1"/><path d="M54.5 802.6h6" stroke="#111" stroke-width="1.4"/><path d="M57.5 808.7V811.0" stroke="#707070" stroke-width="1.1" stroke-dasharray="1.2 1.7" fill="none"/></svg>
</div>
<div class="a" style="left:0px;top:897px;width:792px;height:25px;background:#f0f0f0;"></div>
<div class="a" style="left:0px;top:896px;width:792px;height:1px;background:#d9d9d9;"></div>
<div class="t " style="left:2.2px;top:903.80px;font-size:15px;color:#1c1c1c;letter-spacing:-0.913px">Ready</div>
<div class="a" style="left:643px;top:901px;width:35px;height:22px;background:#f0f0f0;border-top:1px solid #a0a0a0;border-left:1px solid #a0a0a0;border-right:1px solid #fff"></div>
<div class="a" style="left:682px;top:901px;width:41px;height:22px;background:#f0f0f0;border-top:1px solid #a0a0a0;border-left:1px solid #a0a0a0;border-right:1px solid #fff"></div>
<div class="a" style="left:727px;top:901px;width:40px;height:22px;background:#f0f0f0;border-top:1px solid #a0a0a0;border-left:1px solid #a0a0a0;border-right:1px solid #fff"></div>
<div class="t seg" style="left:685px;top:903.80px;font-size:15px;">NUM</div>
<svg style="left:772px;top:904px" width="18" height="18"><g stroke="#b8b8b8" stroke-width="1.3"><path d="M4 18L18 4M9 18L18 9M14 18L18 14"/></g></svg>
</div>
<div class="a" id="aida" style="left:792px;top:0;width:757px;height:922px;background:#f0f0f0;overflow:hidden">
<div class="a" style="left:0px;top:0px;width:757px;height:39px;background:#fff;"></div>
<div class="a" style="left:0px;top:0px;width:757px;height:1.6px;background:#1b5c9e;"></div>
<div class="a" style="left:0px;top:39px;width:8px;height:881px;background:linear-gradient(to right,#9e9e9e 0,#b6b6b6 15%,#cfcfcf 45%,#e2e2e2 80%,#ededed 100%);"></div>
<div class="a" style="left:0px;top:1.6px;width:8px;height:37.6px;background:linear-gradient(to right,#a4a4a4 0,#c4c4c4 15%,#e4e4e4 45%,#f8f8f8 80%,#ffffff 100%);"></div>
<svg style="left:9px;top:10px" width="17" height="20" viewBox="0 0 17 20"><defs><linearGradient id="fl" x1="0" y1="0" x2="0" y2="1"><stop offset="0" stop-color="#f0641e"/><stop offset=".6" stop-color="#fb8c1c"/><stop offset="1" stop-color="#ffd21a"/></linearGradient></defs><path d="M5.5 0C6.5 3 9 5.5 9.3 9C10.2 7.6 10.4 6 10.2 4.6C12 6.6 12.4 8.6 12.2 10.4C13.6 9.4 14.4 7.6 14.6 6C16.6 9 17 12.6 15.4 15.6C14 18.4 11.4 20 8.4 20C4.6 20 1.2 17.6 0.6 14C0.2 12 0.8 10.4 1.6 9C2 10.4 2.8 11.4 3.8 12C3 8 5.4 5 5.5 0Z" fill="url(#fl)"/><path d="M8.3 12C9.6 13.6 10.6 15 10 17C9.6 18.6 8.4 19.6 7 19.4C5.4 19.2 4.4 17.8 4.8 16.2C5.2 14.6 7.6 14 8.3 12Z" fill="#ffe94a"/></svg>
<div class="t " style="left:32.39999999999998px;top:13.20px;font-size:15px;color:#999;letter-spacing:-0.110px;-webkit-text-stroke:0;">System Stability Test - AIDA64</div>
<svg style="left:0;top:0" width="757" height="40"><g stroke="#7a7a7a" stroke-width="1" fill="none"><path d="M604 19.5H616"/><rect x="662.5" y="14.5" width="11" height="11"/><path d="M721.5 14.5L732.5 25.5M732.5 14.5L721.5 25.5"/></g></svg>
<div class="a" style="left:7.5px;top:51px;width:739px;height:822.5px;background:#fff;border:1px solid #e9e9e9"></div>
<svg style="left:22px;top:68.0px" width="20" height="20" viewBox="0 0 20 20"><g><path d="M0.4 7.3L9.5 4.1L18.7 7.3L9.5 10.5Z" fill="#c3d6cc" stroke="#4c6130" stroke-width="1.3" stroke-linejoin="round"/><path d="M0.6 8.6L9.5 11.9L18.5 8.6" fill="none" stroke="#4e5a2c" stroke-width="1.4"/><path d="M3 10.4v1.8M5.6 11.4v1.8M8.4 12.4v1.6M11 12.4v1.6M13.6 11.4v1.8M16.2 10.4v1.8" stroke="#b4a440" stroke-width="1"/></g></svg>
<div class="a" style="left:51px;top:70.0px;width:16px;height:16px;background:#fff;border:1px solid #333"></div>
<svg style="left:51px;top:70.0px" width="16" height="16"><path d="M3.2 8.2L6.6 11.6L12.8 4.4" fill="none" stroke="#222" stroke-width="1.5"/></svg>
<div class="t " style="left:71.60000000000002px;top:70.80px;font-size:15px;color:#1c1c1c;letter-spacing:-1.035px;">Stress CPU</div>
<svg style="left:22px;top:92.6px" width="20" height="20" viewBox="0 0 20 20"><g transform="translate(0,3.6)"><g><path d="M0.4 7.3L9.5 4.1L18.7 7.3L9.5 10.5Z" fill="#c3d6cc" stroke="#4c6130" stroke-width="1.3" stroke-linejoin="round"/><path d="M0.6 8.6L9.5 11.9L18.5 8.6" fill="none" stroke="#4e5a2c" stroke-width="1.4"/><path d="M3 10.4v1.8M5.6 11.4v1.8M8.4 12.4v1.6M11 12.4v1.6M13.6 11.4v1.8M16.2 10.4v1.8" stroke="#b4a440" stroke-width="1"/></g></g></svg>
<div class="t " style="left:23.399999999999977px;top:90.78px;font-size:9px;color:#2e2e2e;letter-spacing:0.55px">123</div>
<div class="a" style="left:51px;top:94.6px;width:16px;height:16px;background:#fff;border:1px solid #333"></div>
<svg style="left:51px;top:94.6px" width="16" height="16"><path d="M3.2 8.2L6.6 11.6L12.8 4.4" fill="none" stroke="#222" stroke-width="1.5"/></svg>
<div class="t " style="left:71.60000000000002px;top:95.40px;font-size:15px;color:#1c1c1c;letter-spacing:-1.108px;">Stress FPU</div>
<svg style="left:22px;top:117.2px" width="20" height="20" viewBox="0 0 20 20"><g><path d="M1.2 9.2L11.6 5.2L18.8 7.4L8.6 11.6Z" fill="#686868"/><path d="M1.2 9.2L8.6 11.6V13.8L1.2 11.4Z" fill="#3a3a3a"/><path d="M8.6 11.6L18.8 7.4V9.6L8.6 13.8Z" fill="#4e4e4e"/><path d="M2.6 12v2.6M5.2 12.9v2.6M9.8 13.4v2.6M12.6 12.2v2.6M15.4 11v2.6M18 10v2.4" stroke="#8c8c8c" stroke-width="1"/></g></svg>
<div class="a" style="left:51px;top:119.2px;width:16px;height:16px;background:#fff;border:1px solid #333"></div>
<svg style="left:51px;top:119.2px" width="16" height="16"><path d="M3.2 8.2L6.6 11.6L12.8 4.4" fill="none" stroke="#222" stroke-width="1.5"/></svg>
<div class="t " style="left:71.60000000000002px;top:120.00px;font-size:15px;color:#1c1c1c;letter-spacing:-0.643px;">Stress cache</div>
<svg style="left:22px;top:141.8px" width="20" height="20" viewBox="0 0 20 20"><g><rect x="0.3" y="2.9" width="18.5" height="11.3" fill="#46a060"/><rect x="0.3" y="12" width="18.5" height="2.2" fill="#a4d08a"/><rect x="2" y="4.4" width="2.8" height="6.6" fill="#27472c"/><rect x="6" y="4.4" width="2.8" height="6.6" fill="#27472c"/><rect x="10.2" y="4.4" width="2.8" height="6.6" fill="#27472c"/><rect x="14.2" y="4.4" width="2.8" height="6.6" fill="#27472c"/><rect x="8.6" y="12.6" width="1.6" height="1.6" fill="#fff"/></g></svg>
<div class="a" style="left:51px;top:143.8px;width:16px;height:16px;background:#fff;border:1px solid #333"></div>
<div class="t " style="left:71.60000000000002px;top:144.60px;font-size:15px;color:#1c1c1c;letter-spacing:-0.362px;">Stress system memory</div>
<svg style="left:22px;top:166.4px" width="20" height="20" viewBox="0 0 20 20"><g><path d="M1.2 12L10.4 8.6L18.8 11.2V13.6L9.2 17.4L1.2 14.8Z" fill="#a8a8a8"/><path d="M1.2 12L10.4 8.6L18.8 11.2L9.2 14.6Z" fill="#dedede"/><path d="M1.2 12.2L9.2 14.8V17.4L1.2 14.8Z" fill="#3e3e3e"/><path d="M2.6 13.6L7.8 15.3" stroke="#f4f4f4" stroke-width="1"/></g></svg>
<div class="a" style="left:51px;top:168.4px;width:16px;height:16px;background:#fff;border:1px solid #333"></div>
<div class="t " style="left:71.60000000000002px;top:169.20px;font-size:15px;color:#1c1c1c;letter-spacing:-0.360px;">Stress local disks</div>
<svg style="left:22px;top:191.0px" width="20" height="20" viewBox="0 0 20 20"><g><path d="M2.8 -2.2L13.6 1.6V12.4L2.8 8.6Z" fill="#2a8ae2"/><path d="M4 -0.4L12.6 2.6V7.2L4 4.2Z" fill="#7cc4f8"/><path d="M3 9.6l3 1.4" stroke="#8a8a8a" stroke-width="1.4"/><rect x="7.6" y="10.4" width="11.2" height="6.4" fill="#2f8c44"/><rect x="9.6" y="12" width="4.6" height="3" fill="#16301c"/><path d="M8 17.4h9" stroke="#c8b040" stroke-width="1.4"/></g></svg>
<div class="a" style="left:51px;top:193.0px;width:16px;height:16px;background:#fff;border:1px solid #333"></div>
<svg style="left:51px;top:193.0px" width="16" height="16"><path d="M3.2 8.2L6.6 11.6L12.8 4.4" fill="none" stroke="#222" stroke-width="1.5"/></svg>
<div class="t " style="left:71.60000000000002px;top:193.80px;font-size:15px;color:#1c1c1c;letter-spacing:-0.914px;">Stress GPU(s)</div>
<div class="a" style="left:224px;top:68px;width:524.6px;height:147px;background:#fff;border:1px solid #828790;border-right:none"></div>
<div class="a" style="left:411px;top:70px;width:1px;height:144px;background:#e8e8e8;"></div>
<div class="a" style="left:226px;top:119px;width:522px;height:1px;background:#eeeeee;"></div>
<div class="a" style="left:226px;top:143px;width:522px;height:1px;background:#eeeeee;"></div>
<div class="a" style="left:226px;top:167px;width:522px;height:1px;background:#eeeeee;"></div>
<div class="a" style="left:226px;top:191px;width:522px;height:1px;background:#eeeeee;"></div>
<div class="t " style="left:232px;top:76.30px;font-size:15px;color:#1c1c1c;letter-spacing:0.187px;">Date &amp; Time</div>
<div class="t " style="left:417.29999999999995px;top:76.30px;font-size:15px;color:#1c1c1c;letter-spacing:-0.388px;">Status</div>
<div class="a" style="left:27.5px;top:250px;width:702.5px;height:281px;background:#fff;border:1px solid #dadada"></div>
<div class="a" style="left:132.29999999999995px;top:225.5px;width:411.70000000000005px;height:25px;background:#f0f0f0;border:1px solid #d9d9d9"></div>
<div class="a" style="left:226.39999999999998px;top:226px;width:1px;height:24px;background:#d9d9d9;"></div>
<div class="a" style="left:295.5px;top:226px;width:1px;height:24px;background:#d9d9d9;"></div>
<div class="a" style="left:355px;top:226px;width:1px;height:24px;background:#d9d9d9;"></div>
<div class="a" style="left:414.70000000000005px;top:226px;width:1px;height:24px;background:#d9d9d9;"></div>
<div class="a" style="left:476px;top:226px;width:1px;height:24px;background:#d9d9d9;"></div>
<div class="a" style="left:27.5px;top:223px;width:105.5px;height:28.5px;background:#fff;border:1px solid #d9d9d9;border-bottom:none"></div>
<div class="t " style="left:35.5px;top:229.10px;font-size:15px;color:#1c1c1c;letter-spacing:-0.202px;">Temperatures</div>
<div class="t " style="left:137.39999999999998px;top:230.90px;font-size:15px;color:#1c1c1c;letter-spacing:-0.424px;">Cooling Fans</div>
<div class="t " style="left:233.29999999999995px;top:230.90px;font-size:15px;color:#1c1c1c;letter-spacing:-0.144px;">Voltages</div>
<div class="t " style="left:302px;top:230.90px;font-size:15px;color:#1c1c1c;letter-spacing:-0.703px;">Powers</div>
<div class="t " style="left:362px;top:230.90px;font-size:15px;color:#1c1c1c;letter-spacing:-0.535px;">Clocks</div>
<div class="t " style="left:422px;top:230.90px;font-size:15px;color:#1c1c1c;letter-spacing:0.086px;">Unified</div>
<div class="t " style="left:482.20000000000005px;top:230.90px;font-size:15px;color:#1c1c1c;letter-spacing:-0.252px;">Statistics</div>
<div class="a" style="left:33.5px;top:262px;width:20.5px;height:258px;background:#e6e6e6;border:1px solid #dadada"></div>
<div class="a" style="left:29px;top:262.4px;width:28.6px;height:11.8px;background:#0a78d7;"></div>
<div class="a" style="left:59px;top:253.2px;width:669px;height:275.5px;background:#000;"></div>
<svg style="left:-792px;top:0" width="2199" height="922"><path d="M912.7 291.3H1457.7M912.7 311.3H1457.7M912.7 331.3H1457.7M912.7 351.3H1457.7M912.7 371.3H1457.7M912.7 391.3H1457.7M912.7 411.3H1457.7M912.7 431.3H1457.7M912.7 451.3H1457.7M912.7 471.3H1457.7M912.7 491.3H1457.7M919.7 291.3V491.3M929.7 291.3V491.3M939.7 291.3V491.3M949.7 291.3V491.3M959.7 291.3V491.3M969.7 291.3V491.3M979.7 291.3V491.3M989.7 291.3V491.3M999.7 291.3V491.3M1009.7 291.3V491.3M1019.7 291.3V491.3M1029.7 291.3V491.3M1039.7 291.3V491.3M1049.7 291.3V491.3M1059.7 291.3V491.3M1069.7 291.3V491.3M1079.7 291.3V491.3M1089.7 291.3V491.3M1099.7 291.3V491.3M1109.7 291.3V491.3M1119.7 291.3V491.3M1129.7 291.3V491.3M1139.7 291.3V491.3M1149.7 291.3V491.3M1159.7 291.3V491.3M1169.7 291.3V491.3M1179.7 291.3V491.3M1189.7 291.3V491.3M1199.7 291.3V491.3M1209.7 291.3V491.3M1219.7 291.3V491.3M1229.7 291.3V491.3M1239.7 291.3V491.3M1249.7 291.3V491.3M1259.7 291.3V491.3M1269.7 291.3V491.3M1279.7 291.3V491.3M1289.7 291.3V491.3M1299.7 291.3V491.3M1309.7 291.3V491.3M1319.7 291.3V491.3M1329.7 291.3V491.3M1339.7 291.3V491.3M1349.7 291.3V491.3M1359.7 291.3V491.3M1369.7 291.3V491.3M1379.7 291.3V491.3M1389.7 291.3V491.3M1399.7 291.3V491.3M1409.7 291.3V491.3M1419.7 291.3V491.3M1429.7 291.3V491.3M1439.7 291.3V491.3M1449.7 291.3V491.3" stroke="#0a8f1c" stroke-width="0.92" fill="none"/>
<path d="M1348.5 435.2L1350.2 441.4L1354.3 423.3L1358.4 441.4L1362.5 421.3L1364.6 435.6L1366.6 421.3L1370.4 443.4L1374.4 425.3L1376.8 439.3L1378.5 430.5L1380.2 441.4L1382.3 435.6L1384.3 443.4L1388.1 431.8L1390.5 443.4L1394.6 429.8L1396.6 441.4L1400.4 431.8L1402.4 441.4L1404.5 437.6L1406.5 445.5L1410.3 429.8L1412.3 441.4L1416.4 425.3L1418.4 437.3L1420.2 429.8L1422.5 441.4L1426.3 427.4L1428.7 439.3L1430.4 435.6L1432.4 445.5L1434.5 435.6L1436.5 443.4L1438.6 427.4L1442.3 445.5L1444.4 431.8L1446.4 443.4L1448.5 433.5L1450.5 445.5L1452.6 437.3L1454.6 445.5L1456.6 435.2" stroke="#d4e2f4" stroke-width="0.9" fill="none"/>
</svg>
<div class="a" style="left:223px;top:264.8px;width:14.5px;height:14.5px;background:#fff;"></div>
<div class="a" style="left:333.4000000000001px;top:264.8px;width:14.5px;height:14.5px;background:#fff;"></div>
<div class="a" style="left:389.5px;top:264.8px;width:14.5px;height:14.5px;background:#fff;"></div>
<svg style="left:333.4000000000001px;top:264.8px" width="15" height="15"><path d="M2.6 7.4L5.8 10.8L12 3.4" fill="none" stroke="#333" stroke-width="1.4"/></svg>
<div class="t " style="left:242.4000000000001px;top:266.70px;font-size:13px;color:#e6e632;letter-spacing:0.390px;">Motherboard</div>
<div class="t " style="left:353.4000000000001px;top:266.70px;font-size:13px;color:#c2d2ea;letter-spacing:-1.348px;">CPU</div>
<div class="t " style="left:409px;top:266.70px;font-size:13px;color:#f0d4a4;letter-spacing:-0.338px;">Samsung SSD 840 Series</div>
<div class="t " style="left:79.79999999999995px;top:286.00px;font-size:13px;color:#f4f4f4;letter-spacing:-0.397px;">100</div>
<div class="t " style="left:100.5px;top:282.35px;font-size:14px;color:#f4f4f4">°</div>
<div class="t " style="left:106.70000000000005px;top:286.00px;font-size:13px;color:#f4f4f4">C</div>
<div class="t " style="left:93.20000000000005px;top:486.20px;font-size:13px;color:#f4f4f4">0</div>
<div class="t " style="left:100.5px;top:482.55px;font-size:14px;color:#f4f4f4">°</div>
<div class="t " style="left:106.70000000000005px;top:486.20px;font-size:13px;color:#f4f4f4">C</div>
<div class="t " style="left:670.4000000000001px;top:430.30px;font-size:13px;color:#c8d8ec;letter-spacing:-0.730px;">28</div>
<div class="a" style="left:26.799999999999955px;top:534px;width:701.2px;height:275.6px;background:#000;"></div>
<svg style="left:-792px;top:0" width="2199" height="922"><path d="M880.7 572.3H1458M880.7 592.3H1458M880.7 612.3H1458M880.7 632.3H1458M880.7 652.3H1458M880.7 672.3H1458M880.7 692.3H1458M880.7 712.3H1458M880.7 732.3H1458M880.7 752.3H1458M880.7 772.3H1458M887.7 572.3V772.3M897.7 572.3V772.3M907.7 572.3V772.3M917.7 572.3V772.3M927.7 572.3V772.3M937.7 572.3V772.3M947.7 572.3V772.3M957.7 572.3V772.3M967.7 572.3V772.3M977.7 572.3V772.3M987.7 572.3V772.3M997.7 572.3V772.3M1007.7 572.3V772.3M1017.7 572.3V772.3M1027.7 572.3V772.3M1037.7 572.3V772.3M1047.7 572.3V772.3M1057.7 572.3V772.3M1067.7 572.3V772.3M1077.7 572.3V772.3M1087.7 572.3V772.3M1097.7 572.3V772.3M1107.7 572.3V772.3M1117.7 572.3V772.3M1127.7 572.3V772.3M1137.7 572.3V772.3M1147.7 572.3V772.3M1157.7 572.3V772.3M1167.7 572.3V772.3M1177.7 572.3V772.3M1187.7 572.3V772.3M1197.7 572.3V772.3M1207.7 572.3V772.3M1217.7 572.3V772.3M1227.7 572.3V772.3M1237.7 572.3V772.3M1247.7 572.3V772.3M1257.7 572.3V772.3M1267.7 572.3V772.3M1277.7 572.3V772.3M1287.7 572.3V772.3M1297.7 572.3V772.3M1307.7 572.3V772.3M1317.7 572.3V772.3M1327.7 572.3V772.3M1337.7 572.3V772.3M1347.7 572.3V772.3M1357.7 572.3V772.3M1367.7 572.3V772.3M1377.7 572.3V772.3M1387.7 572.3V772.3M1397.7 572.3V772.3M1407.7 572.3V772.3M1417.7 572.3V772.3M1427.7 572.3V772.3M1437.7 572.3V772.3M1447.7 572.3V772.3M1457.7 572.3V772.3" stroke="#0a8f1c" stroke-width="0.92" fill="none"/>
<path d="M908.2 772.1L909.3 769.1L912.7 768.0L914.1 766.4L916.2 772.1L918.2 769.1L920.9 758.2L923.4 756.2L925.7 758.2L928.0 766.4L931.8 766.7L934.6 770.5L938.0 766.7L940.0 770.5L950.9 770.8L952.3 772.4L954.4 764.3L957.1 768.4L960.2 760.5L963.2 769.1L965.9 766.4L968.0 770.5L974.1 770.5L976.9 754.1L978.9 760.9L981.6 771.8L984.4 772.1L989.1 751.4L990.5 750.7L992.1 769.1L994.3 740.2L996.6 750.0L1000.1 770.5L1009.6 770.8L1012.3 772.4L1015.1 770.5L1018.5 770.5L1020.5 772.4L1026.7 772.4L1028.4 768.0L1030.1 772.4L1032.1 770.5L1035.5 770.5L1038.3 772.4L1041.7 770.5L1043.7 772.4L1046.7 770.2L1049.8 772.4L1051.9 770.8L1053.9 772.4L1057.4 770.5L1060.1 772.4L1063.5 770.8L1065.5 772.4L1068.3 766.4L1070.3 770.5L1072.4 772.4L1075.8 770.5L1077.8 772.4L1080.5 770.5L1083.3 772.4L1088.0 768.0L1090.8 770.8L1098.3 770.8L1101.0 772.4L1103.7 770.5L1106.5 768.0L1107.8 772.4L1111.2 772.4L1113.3 770.5L1115.3 772.4L1118.1 770.5L1125.6 770.5L1128.3 766.4L1130.3 772.4L1136.5 772.4L1138.5 770.5L1140.6 772.4L1142.6 770.8L1144.7 772.4L1147.4 770.5L1154.2 770.5L1156.9 772.4L1159.0 770.8L1165.1 770.8L1167.9 768.0L1169.2 772.4L1170.0 772.4L1172.7 770.5L1175.5 772.4L1178.2 770.8L1180.9 770.8L1183.6 772.4L1187.7 772.4L1189.1 770.8L1197.3 770.8L1200.7 772.4L1203.4 770.8L1212.3 770.8L1215.0 772.4L1217.7 770.8L1225.3 770.8L1226.6 771.2L1228.7 768.0L1230.7 768.6L1232.8 770.8L1235.5 770.8L1238.2 772.4L1240.9 770.8L1246.4 770.8L1249.1 772.4L1251.9 770.8L1254.6 772.4L1258.7 770.8L1261.4 772.4L1264.1 770.8L1266.9 772.4L1269.6 770.8L1272.3 768.0L1274.4 770.5L1276.4 768.0L1279.1 772.4L1283.2 770.8L1286.6 768.0L1288.7 770.8L1291.4 770.8L1294.1 772.4L1296.2 770.8L1298.2 766.4L1299.6 772.4L1303.0 772.4L1305.1 770.8L1307.1 772.4L1309.2 770.8L1311.9 772.4L1313.9 770.8L1316.7 772.4L1318.7 770.8L1321.4 770.8L1322.8 772.4L1324.8 766.4L1326.9 770.8L1328.3 760.9L1330.3 728.2L1331.7 739.1L1333.7 750.0L1335.8 765.0L1337.1 770.8L1338.5 768.0L1340.5 770.8L1344.6 770.8L1347.4 768.0L1350.1 770.8L1355.5 770.8L1357.6 768.0L1358.9 770.8L1360.3 766.4L1362.4 770.8L1366.5 770.8L1368.5 756.2L1370.5 765.0L1372.6 770.5L1374.6 772.4L1377.4 770.8L1380.8 770.8L1383.5 772.4L1386.9 770.8L1389.6 770.8L1392.4 772.4L1395.1 772.4L1397.1 770.8L1400.6 772.4L1403.3 770.8L1405.3 772.4L1408.1 768.0L1409.4 772.4L1412.2 769.4L1414.2 772.4L1416.9 770.8L1419.7 770.8L1422.4 772.4L1425.1 770.8L1428.5 770.8L1431.3 772.4L1434.0 770.8L1436.0 772.4L1438.8 770.8L1440.8 772.4L1444.2 768.0L1446.3 772.4L1448.3 754.1L1450.4 763.7L1452.4 768.0L1454.4 772.4L1456.5 768.0" stroke="#f0f03c" stroke-width="1.05" fill="none" stroke-linejoin="round"/></svg>
<div class="t " style="left:345.5px;top:548.00px;font-size:13px;color:#f4f4f4;letter-spacing:-0.515px;">CPU Usage</div>
<div class="t " style="left:52.60000000000002px;top:566.80px;font-size:13px;color:#f4f4f4;letter-spacing:-0.612px;">100%</div>
<div class="t " style="left:65px;top:765.90px;font-size:13px;color:#f4f4f4;letter-spacing:-0.195px;">0%</div>
<div class="t " style="left:670.5999999999999px;top:762.80px;font-size:13px;color:#e8e83c;letter-spacing:-0.895px;">2%</div>
<div class="t " style="left:27.200000000000045px;top:835.00px;font-size:15px;color:#1c1c1c;letter-spacing:-0.154px;">Remaining Battery:</div>
<div class="a" style="left:167.20000000000005px;top:828px;width:98.8px;height:28.8px;background:#000;"></div>
<div class="t " style="left:181px;top:835.00px;font-size:15px;color:#22c424;letter-spacing:0.159px;">No battery</div>
<div class="t " style="left:290.20000000000005px;top:835.00px;font-size:15px;color:#1c1c1c;letter-spacing:-0.263px;">Test Started:</div>
<div class="a" style="left:386px;top:828px;width:171.8px;height:28.8px;background:#000;"></div>
<div class="t " style="left:582.3px;top:835.00px;font-size:15px;color:#1c1c1c;letter-spacing:-0.235px;">Elapsed Time:</div>
<div class="a" style="left:689px;top:828px;width:59.3px;height:28.8px;background:#000;"></div>
<div class="a" style="left:8px;top:884.5px;width:89.60000000000002px;height:25.2px;background:#e1e1e1;border:1px solid #adadad"></div>
<div class="t " style="left:36.299999999999955px;top:889.90px;font-size:15px;color:#1c1c1c;letter-spacing:0.264px;">Start</div>
<div class="a" style="left:107px;top:884.5px;width:90.79999999999995px;height:25.2px;background:#cccccc;border:1px solid #bfbfbf"></div>
<div class="t " style="left:137.14999999999998px;top:889.90px;font-size:15px;color:#8a8a8a;letter-spacing:-0.090px;">Stop</div>
<div class="a" style="left:235.4000000000001px;top:884.5px;width:90.0px;height:25.2px;background:#e1e1e1;border:1px solid #adadad"></div>
<div class="t " style="left:262.9000000000001px;top:889.90px;font-size:15px;color:#1c1c1c;letter-spacing:-0.170px;">Clear</div>
<div class="a" style="left:335px;top:884.5px;width:89.59999999999991px;height:25.2px;background:#e1e1e1;border:1px solid #adadad"></div>
<div class="t " style="left:364.04999999999995px;top:889.90px;font-size:15px;color:#1c1c1c;letter-spacing:-0.673px;">Save</div>
<div class="a" style="left:463px;top:884.5px;width:89.79999999999995px;height:25.2px;background:#e1e1e1;border:1px solid #adadad"></div>
<div class="t " style="left:486.6500000000001px;top:889.90px;font-size:15px;color:#1c1c1c;letter-spacing:-0.834px;">CPUID</div>
<div class="a" style="left:563px;top:884.5px;width:89.40000000000009px;height:25.2px;background:#e1e1e1;border:1px solid #adadad"></div>
<div class="t " style="left:569.2px;top:889.90px;font-size:15px;color:#1c1c1c;letter-spacing:-0.353px;">Preferences</div>
<div class="a" style="left:656.4000000000001px;top:884.5px;width:90.39999999999986px;height:25.2px;background:#e1e1e1;border:1px solid #adadad"></div>
<div class="t " style="left:683.3499999999999px;top:889.90px;font-size:15px;color:#1c1c1c;letter-spacing:-0.370px;">Close</div>
<div class="a" style="left:0px;top:919.8px;width:757px;height:3px;background:#1c5288;"></div>
<div class="a" style="left:748.3px;top:39px;width:8.2px;height:881px;background:linear-gradient(to right,#eaecee 0,#dde0e4 50%,#cccdcf 100%);"></div>
<div class="a" style="left:746px;top:1.6px;width:10.5px;height:37.6px;background:linear-gradient(to right,#fdfdfd 0,#eef0f3 40%,#cdd5de 100%);"></div>
</div>
<div class="a" id="hwi" style="left:1548px;top:0;width:651px;height:922px;background:#fff;overflow:hidden">
<svg width="0" height="0" style="left:0;top:0"><defs><linearGradient id="ck" x1="0" y1="0" x2="0" y2="1"><stop offset="0" stop-color="#8e8e8e"/><stop offset="1" stop-color="#1c1c1c"/></linearGradient></defs></svg>
<div class="a" style="left:0px;top:0px;width:651px;height:2.2px;background:#0c5aa6;"></div>
<div class="a" style="left:0px;top:2.2px;width:1.7px;height:920px;background:#2a74b8;"></div>
<svg style="left:11px;top:12px" width="18" height="18" viewBox="0 0 18 18"><defs><linearGradient id="hwg" x1="0" y1="0" x2="0" y2="1"><stop offset="0" stop-color="#123a63"/><stop offset=".5" stop-color="#2f7fbf"/><stop offset=".62" stop-color="#0a0a0a"/><stop offset="1" stop-color="#050505"/></linearGradient></defs><rect width="18" height="18" rx="2.6" fill="url(#hwg)"/><rect x="4" y="2" width="2.6" height="6.5" fill="#bfeeff"/><rect x="8" y="4" width="2.4" height="4.5" fill="#bfeeff"/><rect x="11.8" y="6.6" width="2.2" height="2" fill="#bfeeff"/><rect x="4" y="11.4" width="2.6" height="4.6" fill="#fff"/><rect x="8" y="11.4" width="2.4" height="4.6" fill="#fff"/><rect x="11.8" y="11.4" width="2.2" height="4.6" fill="#fff"/></svg>
<div class="t " style="left:36px;top:13.50px;font-size:15px;color:#000;letter-spacing:-0.403px">HWiNFO64 v5.72-3333 Sensor Status</div>
<svg style="left:0;top:0" width="651" height="40"><g stroke="#111" stroke-width="1.2" fill="none"><path d="M499 20.5H511"/><rect x="557.5" y="15.5" width="11.5" height="11.5"/><path d="M616 15L628 27M628 15L616 27"/></g></svg>
<div class="a" style="left:1.4px;top:40px;width:650px;height:1px;background:#7e7e7e;"></div>
<div class="t " style="left:9.6px;top:48.62px;font-size:12.5px;color:#111;letter-spacing:0.015px">Sensor</div>
<div class="t" style="right:430.20px;top:48.62px;font-size:12.5px;color:#111;letter-spacing:0.130px;margin-right:-0.130px">Current</div>
<div class="t" style="right:330.20px;top:48.62px;font-size:12.5px;color:#111;letter-spacing:0.142px;margin-right:-0.142px">Minimum</div>
<div class="t" style="right:230.20px;top:48.62px;font-size:12.5px;color:#111;letter-spacing:0.075px;margin-right:-0.075px">Maximum</div>
<div class="t" style="right:130.20px;top:48.62px;font-size:12.5px;color:#111;letter-spacing:0.023px;margin-right:-0.023px">Average</div>
<div class="a" style="left:1.400000000000091px;top:41px;width:649.5999999999999px;height:812px;overflow:hidden">
<div class="a" style="left:25.8px;top:25.1px;width:499.4999999999998px;height:19.6px;background:#dbdbdb;"></div>
<div class="a" style="left:25.8px;top:46.3px;width:499.4999999999998px;height:20.4px;background:#f0f0f0;"></div>
<div class="a" style="left:25.8px;top:88.3px;width:499.4999999999998px;height:20.4px;background:#f0f0f0;"></div>
<div class="a" style="left:25.8px;top:130.3px;width:499.4999999999998px;height:20.4px;background:#f0f0f0;"></div>
<div class="a" style="left:25.8px;top:172.3px;width:499.4999999999998px;height:20.4px;background:#f0f0f0;"></div>
<div class="a" style="left:25.8px;top:214.1px;width:499.4999999999998px;height:19.6px;background:#dbdbdb;"></div>
<div class="a" style="left:25.8px;top:256.3px;width:499.4999999999998px;height:20.4px;background:#f0f0f0;"></div>
<div class="a" style="left:25.8px;top:298.3px;width:499.4999999999998px;height:20.4px;background:#f0f0f0;"></div>
<div class="a" style="left:25.8px;top:340.3px;width:499.4999999999998px;height:20.4px;background:#f0f0f0;"></div>
<div class="a" style="left:25.8px;top:382.3px;width:499.4999999999998px;height:20.4px;background:#f0f0f0;"></div>
<div class="a" style="left:25.8px;top:403.1px;width:499.4999999999998px;height:19.6px;background:#dbdbdb;"></div>
<div class="a" style="left:25.8px;top:424.3px;width:499.4999999999998px;height:20.4px;background:#f0f0f0;"></div>
<div class="a" style="left:25.8px;top:466.3px;width:499.4999999999998px;height:20.4px;background:#f0f0f0;"></div>
<div class="a" style="left:25.8px;top:508.3px;width:499.4999999999998px;height:20.4px;background:#f0f0f0;"></div>
<div class="a" style="left:25.8px;top:550.3px;width:499.4999999999998px;height:20.4px;background:#f0f0f0;"></div>
<div class="a" style="left:25.8px;top:592.3px;width:499.4999999999998px;height:20.4px;background:#f0f0f0;"></div>
<div class="a" style="left:25.8px;top:634.1px;width:499.4999999999998px;height:19.6px;background:#dbdbdb;"></div>
<div class="a" style="left:25.8px;top:676.3px;width:499.4999999999998px;height:20.4px;background:#f0f0f0;"></div>
<div class="a" style="left:25.8px;top:718.3px;width:499.4999999999998px;height:20.4px;background:#f0f0f0;"></div>
<div class="a" style="left:25.8px;top:760.1px;width:499.4999999999998px;height:19.6px;background:#dbdbdb;"></div>
<div class="a" style="left:25.8px;top:802.3px;width:499.4999999999998px;height:20.4px;background:#f0f0f0;"></div>
<div class="a" style="left:3.6px;top:44.9px;width:623.3000000000002px;height:1px;background:rgba(226,226,226,.55);"></div>
<div class="a" style="left:3.6px;top:65.9px;width:623.3000000000002px;height:1px;background:rgba(226,226,226,.55);"></div>
<div class="a" style="left:3.6px;top:86.9px;width:623.3000000000002px;height:1px;background:rgba(226,226,226,.55);"></div>
<div class="a" style="left:3.6px;top:107.9px;width:623.3000000000002px;height:1px;background:rgba(226,226,226,.55);"></div>
<div class="a" style="left:3.6px;top:128.9px;width:623.3000000000002px;height:1px;background:rgba(226,226,226,.55);"></div>
<div class="a" style="left:3.6px;top:149.9px;width:623.3000000000002px;height:1px;background:rgba(226,226,226,.55);"></div>
<div class="a" style="left:3.6px;top:170.9px;width:623.3000000000002px;height:1px;background:rgba(226,226,226,.55);"></div>
<div class="a" style="left:3.6px;top:191.9px;width:623.3000000000002px;height:1px;background:rgba(226,226,226,.55);"></div>
<div class="a" style="left:3.6px;top:212.9px;width:623.3000000000002px;height:1px;background:rgba(226,226,226,.55);"></div>
<div class="a" style="left:3.6px;top:233.9px;width:623.3000000000002px;height:1px;background:rgba(226,226,226,.55);"></div>
<div class="a" style="left:3.6px;top:254.9px;width:623.3000000000002px;height:1px;background:rgba(226,226,226,.55);"></div>
<div class="a" style="left:3.6px;top:275.9px;width:623.3000000000002px;height:1px;background:rgba(226,226,226,.55);"></div>
<div class="a" style="left:3.6px;top:296.9px;width:623.3000000000002px;height:1px;background:rgba(226,226,226,.55);"></div>
<div class="a" style="left:3.6px;top:317.9px;width:623.3000000000002px;height:1px;background:rgba(226,226,226,.55);"></div>
<div class="a" style="left:3.6px;top:338.9px;width:623.3000000000002px;height:1px;background:rgba(226,226,226,.55);"></div>
<div class="a" style="left:3.6px;top:359.9px;width:623.3000000000002px;height:1px;background:rgba(226,226,226,.55);"></div>
<div class="a" style="left:3.6px;top:380.9px;width:623.3000000000002px;height:1px;background:rgba(226,226,226,.55);"></div>
<div class="a" style="left:3.6px;top:401.9px;width:623.3000000000002px;height:1px;background:rgba(226,226,226,.55);"></div>
<div class="a" style="left:3.6px;top:422.9px;width:623.3000000000002px;height:1px;background:rgba(226,226,226,.55);"></div>
<div class="a" style="left:3.6px;top:443.9px;width:623.3000000000002px;height:1px;background:rgba(226,226,226,.55);"></div>
<div class="a" style="left:3.6px;top:464.9px;width:623.3000000000002px;height:1px;background:rgba(226,226,226,.55);"></div>
<div class="a" style="left:3.6px;top:485.9px;width:623.3000000000002px;height:1px;background:rgba(226,226,226,.55);"></div>
<div class="a" style="left:3.6px;top:506.9px;width:623.3000000000002px;height:1px;background:rgba(226,226,226,.55);"></div>
<div class="a" style="left:3.6px;top:527.9px;width:623.3000000000002px;height:1px;background:rgba(226,226,226,.55);"></div>
<div class="a" style="left:3.6px;top:548.9px;width:623.3000000000002px;height:1px;background:rgba(226,226,226,.55);"></div>
<div class="a" style="left:3.6px;top:569.9px;width:623.3000000000002px;height:1px;background:rgba(226,226,226,.55);"></div>
<div class="a" style="left:3.6px;top:590.9px;width:623.3000000000002px;height:1px;background:rgba(226,226,226,.55);"></div>
<div class="a" style="left:3.6px;top:611.9px;width:623.3000000000002px;height:1px;background:rgba(226,226,226,.55);"></div>
<div class="a" style="left:3.6px;top:632.9px;width:623.3000000000002px;height:1px;background:rgba(226,226,226,.55);"></div>
<div class="a" style="left:3.6px;top:653.9px;width:623.3000000000002px;height:1px;background:rgba(226,226,226,.55);"></div>
<div class="a" style="left:3.6px;top:674.9px;width:623.3000000000002px;height:1px;background:rgba(226,226,226,.55);"></div>
<div class="a" style="left:3.6px;top:695.9px;width:623.3000000000002px;height:1px;background:rgba(226,226,226,.55);"></div>
<div class="a" style="left:3.6px;top:716.9px;width:623.3000000000002px;height:1px;background:rgba(226,226,226,.55);"></div>
<div class="a" style="left:3.6px;top:737.9px;width:623.3000000000002px;height:1px;background:rgba(226,226,226,.55);"></div>
<div class="a" style="left:3.6px;top:758.9px;width:623.3000000000002px;height:1px;background:rgba(226,226,226,.55);"></div>
<div class="a" style="left:3.6px;top:779.9px;width:623.3000000000002px;height:1px;background:rgba(226,226,226,.55);"></div>
<div class="a" style="left:3.6px;top:800.9px;width:623.3000000000002px;height:1px;background:rgba(226,226,226,.55);"></div>
<div class="a" style="left:3.6px;top:821.9px;width:623.3000000000002px;height:1px;background:rgba(226,226,226,.55);"></div>
<div class="a" style="left:3.6px;top:842.9px;width:623.3000000000002px;height:1px;background:rgba(226,226,226,.55);"></div>
<div class="a" style="left:125.3px;top:0px;width:1px;height:812px;background:rgba(215,215,215,.5);"></div>
<div class="a" style="left:225.3px;top:0px;width:1px;height:812px;background:rgba(215,215,215,.5);"></div>
<div class="a" style="left:325.3px;top:0px;width:1px;height:812px;background:rgba(215,215,215,.5);"></div>
<div class="a" style="left:425.3px;top:0px;width:1px;height:812px;background:rgba(215,215,215,.5);"></div>
<div class="a" style="left:525.3px;top:0px;width:1px;height:812px;background:rgba(215,215,215,.5);"></div>
<svg style="left:7.6px;top:25.5px" width="18" height="19" viewBox="0 0 18 19"><g transform="translate(-0.5,0.6)"><rect x="3" y="1" width="11" height="17" rx="1" fill="#454545"/><rect x="4" y="2" width="9" height="15" fill="#545454"/><path d="M1 4.5h2M1 8h2M1 11.5h2M1 15h2M14 4.5h2M14 8h2M14 11.5h2M14 15h2" stroke="#9a9a9a" stroke-width="1.3"/></g></svg>
<div class="t" style="left:29.0px;top:29.72px;font-size:12.5px;font-style:italic;color:#111;letter-spacing:0.125px">Drive: Samsun...</div>
<svg style="left:7.6px;top:46.5px" width="18" height="19" viewBox="0 0 18 19"><g><circle cx="7.8" cy="9.8" r="6.6" fill="#e3e3e7" stroke="url(#ck)" stroke-width="1.9"/><path d="M7.8 9.8L4.9 8.7M7.8 9.8H11.3" stroke="#3c3c3c" stroke-width="1.1" fill="none"/></g></svg>
<div class="t" style="left:28.0px;top:50.72px;font-size:12.5px;color:#111;letter-spacing:0.050px">Read Activity</div>
<div class="t" style="right:430.53px;top:50.72px;font-size:12.5px;color:#111;letter-spacing:0.327px">0.0 %</div>
<div class="t" style="right:330.53px;top:50.72px;font-size:12.5px;color:#111;letter-spacing:0.327px">0.0 %</div>
<div class="t" style="right:230.53px;top:50.72px;font-size:12.5px;color:#111;letter-spacing:0.327px">0.1 %</div>
<div class="t" style="right:130.53px;top:50.72px;font-size:12.5px;color:#111;letter-spacing:0.327px">0.0 %</div>
<svg style="left:7.6px;top:67.5px" width="18" height="19" viewBox="0 0 18 19"><g><circle cx="7.8" cy="9.8" r="6.6" fill="#e3e3e7" stroke="url(#ck)" stroke-width="1.9"/><path d="M7.8 9.8L4.9 8.7M7.8 9.8H11.3" stroke="#3c3c3c" stroke-width="1.1" fill="none"/></g></svg>
<div class="t" style="left:28.0px;top:71.72px;font-size:12.5px;color:#111;letter-spacing:0.250px">Write Activity</div>
<div class="t" style="right:430.53px;top:71.72px;font-size:12.5px;color:#111;letter-spacing:0.327px">0.0 %</div>
<div class="t" style="right:330.53px;top:71.72px;font-size:12.5px;color:#111;letter-spacing:0.327px">0.0 %</div>
<div class="t" style="right:230.53px;top:71.72px;font-size:12.5px;color:#111;letter-spacing:0.327px">0.6 %</div>
<div class="t" style="right:130.53px;top:71.72px;font-size:12.5px;color:#111;letter-spacing:0.327px">0.0 %</div>
<svg style="left:7.6px;top:88.5px" width="18" height="19" viewBox="0 0 18 19"><g><circle cx="7.8" cy="9.8" r="6.6" fill="#e3e3e7" stroke="url(#ck)" stroke-width="1.9"/><path d="M7.8 9.8L4.9 8.7M7.8 9.8H11.3" stroke="#3c3c3c" stroke-width="1.1" fill="none"/></g></svg>
<div class="t" style="left:28.0px;top:92.72px;font-size:12.5px;color:#111;letter-spacing:0.295px">Total Activity</div>
<div class="t" style="right:430.53px;top:92.72px;font-size:12.5px;color:#111;letter-spacing:0.327px">0.0 %</div>
<div class="t" style="right:330.53px;top:92.72px;font-size:12.5px;color:#111;letter-spacing:0.327px">0.0 %</div>
<div class="t" style="right:230.53px;top:92.72px;font-size:12.5px;color:#111;letter-spacing:0.327px">0.6 %</div>
<div class="t" style="right:130.53px;top:92.72px;font-size:12.5px;color:#111;letter-spacing:0.327px">0.0 %</div>
<svg style="left:7.6px;top:109.5px" width="18" height="19" viewBox="0 0 18 19"><g><circle cx="7.8" cy="9.8" r="6.6" fill="#e3e3e7" stroke="url(#ck)" stroke-width="1.9"/><path d="M7.8 9.8L4.9 8.7M7.8 9.8H11.3" stroke="#3c3c3c" stroke-width="1.1" fill="none"/></g></svg>
<div class="t" style="left:28.0px;top:113.72px;font-size:12.5px;color:#111;letter-spacing:-0.130px">Read Rate</div>
<div class="t" style="right:430.29px;top:113.72px;font-size:12.5px;color:#111;letter-spacing:0.087px">0.000 MB/s</div>
<div class="t" style="right:330.29px;top:113.72px;font-size:12.5px;color:#111;letter-spacing:0.087px">0.000 MB/s</div>
<div class="t" style="right:230.29px;top:113.72px;font-size:12.5px;color:#111;letter-spacing:0.087px">0.027 MB/s</div>
<div class="t" style="right:130.29px;top:113.72px;font-size:12.5px;color:#111;letter-spacing:0.087px">0.000 MB/s</div>
<svg style="left:7.6px;top:130.5px" width="18" height="19" viewBox="0 0 18 19"><g><circle cx="7.8" cy="9.8" r="6.6" fill="#e3e3e7" stroke="url(#ck)" stroke-width="1.9"/><path d="M7.8 9.8L4.9 8.7M7.8 9.8H11.3" stroke="#3c3c3c" stroke-width="1.1" fill="none"/></g></svg>
<div class="t" style="left:28.0px;top:134.72px;font-size:12.5px;color:#111;letter-spacing:0.168px">Write Rate</div>
<div class="t" style="right:430.29px;top:134.72px;font-size:12.5px;color:#111;letter-spacing:0.087px">0.000 MB/s</div>
<div class="t" style="right:330.29px;top:134.72px;font-size:12.5px;color:#111;letter-spacing:0.087px">0.000 MB/s</div>
<div class="t" style="right:230.29px;top:134.72px;font-size:12.5px;color:#111;letter-spacing:0.087px">0.064 MB/s</div>
<div class="t" style="right:130.29px;top:134.72px;font-size:12.5px;color:#111;letter-spacing:0.087px">0.004 MB/s</div>
<svg style="left:7.6px;top:151.5px" width="18" height="19" viewBox="0 0 18 19"><g><circle cx="7.8" cy="9.8" r="6.6" fill="#e3e3e7" stroke="url(#ck)" stroke-width="1.9"/><path d="M7.8 9.8L4.9 8.7M7.8 9.8H11.3" stroke="#3c3c3c" stroke-width="1.1" fill="none"/></g></svg>
<div class="t" style="left:28.0px;top:155.72px;font-size:12.5px;color:#111;letter-spacing:0.196px">Read Total</div>
<div class="t" style="right:430.06px;top:155.72px;font-size:12.5px;color:#111;letter-spacing:-0.138px">3,720 MB</div>
<div class="t" style="right:330.06px;top:155.72px;font-size:12.5px;color:#111;letter-spacing:-0.138px">3,720 MB</div>
<div class="t" style="right:230.06px;top:155.72px;font-size:12.5px;color:#111;letter-spacing:-0.138px">3,720 MB</div>
<svg style="left:7.6px;top:172.5px" width="18" height="19" viewBox="0 0 18 19"><g><circle cx="7.8" cy="9.8" r="6.6" fill="#e3e3e7" stroke="url(#ck)" stroke-width="1.9"/><path d="M7.8 9.8L4.9 8.7M7.8 9.8H11.3" stroke="#3c3c3c" stroke-width="1.1" fill="none"/></g></svg>
<div class="t" style="left:28.0px;top:176.72px;font-size:12.5px;color:#111;letter-spacing:0.474px">Write Total</div>
<div class="t" style="right:429.94px;top:176.72px;font-size:12.5px;color:#111;letter-spacing:-0.264px">507 MB</div>
<div class="t" style="right:329.94px;top:176.72px;font-size:12.5px;color:#111;letter-spacing:-0.264px">506 MB</div>
<div class="t" style="right:229.94px;top:176.72px;font-size:12.5px;color:#111;letter-spacing:-0.264px">507 MB</div>
<svg style="left:7.6px;top:214.5px" width="18" height="19" viewBox="0 0 18 19"><g transform="translate(-0.5,0.6)"><rect x="3" y="1" width="11" height="17" rx="1" fill="#454545"/><rect x="4" y="2" width="9" height="15" fill="#545454"/><path d="M1 4.5h2M1 8h2M1 11.5h2M1 15h2M14 4.5h2M14 8h2M14 11.5h2M14 15h2" stroke="#9a9a9a" stroke-width="1.3"/></g></svg>
<div class="t" style="left:29.0px;top:218.72px;font-size:12.5px;font-style:italic;color:#111;letter-spacing:0.149px">Drive: ST1000...</div>
<svg style="left:7.6px;top:235.5px" width="18" height="19" viewBox="0 0 18 19"><g><circle cx="7.8" cy="9.8" r="6.6" fill="#e3e3e7" stroke="url(#ck)" stroke-width="1.9"/><path d="M7.8 9.8L4.9 8.7M7.8 9.8H11.3" stroke="#3c3c3c" stroke-width="1.1" fill="none"/></g></svg>
<div class="t" style="left:28.0px;top:239.72px;font-size:12.5px;color:#111;letter-spacing:0.050px">Read Activity</div>
<div class="t" style="right:430.53px;top:239.72px;font-size:12.5px;color:#111;letter-spacing:0.327px">0.0 %</div>
<div class="t" style="right:330.53px;top:239.72px;font-size:12.5px;color:#111;letter-spacing:0.327px">0.0 %</div>
<div class="t" style="right:230.53px;top:239.72px;font-size:12.5px;color:#111;letter-spacing:0.327px">0.0 %</div>
<div class="t" style="right:130.53px;top:239.72px;font-size:12.5px;color:#111;letter-spacing:0.327px">0.0 %</div>
<svg style="left:7.6px;top:256.5px" width="18" height="19" viewBox="0 0 18 19"><g><circle cx="7.8" cy="9.8" r="6.6" fill="#e3e3e7" stroke="url(#ck)" stroke-width="1.9"/><path d="M7.8 9.8L4.9 8.7M7.8 9.8H11.3" stroke="#3c3c3c" stroke-width="1.1" fill="none"/></g></svg>
<div class="t" style="left:28.0px;top:260.72px;font-size:12.5px;color:#111;letter-spacing:0.250px">Write Activity</div>
<div class="t" style="right:430.53px;top:260.72px;font-size:12.5px;color:#111;letter-spacing:0.327px">0.0 %</div>
<div class="t" style="right:330.53px;top:260.72px;font-size:12.5px;color:#111;letter-spacing:0.327px">0.0 %</div>
<div class="t" style="right:230.53px;top:260.72px;font-size:12.5px;color:#111;letter-spacing:0.327px">0.0 %</div>
<div class="t" style="right:130.53px;top:260.72px;font-size:12.5px;color:#111;letter-spacing:0.327px">0.0 %</div>
<svg style="left:7.6px;top:277.5px" width="18" height="19" viewBox="0 0 18 19"><g><circle cx="7.8" cy="9.8" r="6.6" fill="#e3e3e7" stroke="url(#ck)" stroke-width="1.9"/><path d="M7.8 9.8L4.9 8.7M7.8 9.8H11.3" stroke="#3c3c3c" stroke-width="1.1" fill="none"/></g></svg>
<div class="t" style="left:28.0px;top:281.72px;font-size:12.5px;color:#111;letter-spacing:0.295px">Total Activity</div>
<div class="t" style="right:430.53px;top:281.72px;font-size:12.5px;color:#111;letter-spacing:0.327px">0.0 %</div>
<div class="t" style="right:330.53px;top:281.72px;font-size:12.5px;color:#111;letter-spacing:0.327px">0.0 %</div>
<div class="t" style="right:230.53px;top:281.72px;font-size:12.5px;color:#111;letter-spacing:0.327px">0.0 %</div>
<div class="t" style="right:130.53px;top:281.72px;font-size:12.5px;color:#111;letter-spacing:0.327px">0.0 %</div>
<svg style="left:7.6px;top:298.5px" width="18" height="19" viewBox="0 0 18 19"><g><circle cx="7.8" cy="9.8" r="6.6" fill="#e3e3e7" stroke="url(#ck)" stroke-width="1.9"/><path d="M7.8 9.8L4.9 8.7M7.8 9.8H11.3" stroke="#3c3c3c" stroke-width="1.1" fill="none"/></g></svg>
<div class="t" style="left:28.0px;top:302.72px;font-size:12.5px;color:#111;letter-spacing:-0.130px">Read Rate</div>
<div class="t" style="right:430.29px;top:302.72px;font-size:12.5px;color:#111;letter-spacing:0.087px">0.000 MB/s</div>
<div class="t" style="right:330.29px;top:302.72px;font-size:12.5px;color:#111;letter-spacing:0.087px">0.000 MB/s</div>
<div class="t" style="right:230.29px;top:302.72px;font-size:12.5px;color:#111;letter-spacing:0.087px">0.000 MB/s</div>
<div class="t" style="right:130.29px;top:302.72px;font-size:12.5px;color:#111;letter-spacing:0.087px">0.000 MB/s</div>
<svg style="left:7.6px;top:319.5px" width="18" height="19" viewBox="0 0 18 19"><g><circle cx="7.8" cy="9.8" r="6.6" fill="#e3e3e7" stroke="url(#ck)" stroke-width="1.9"/><path d="M7.8 9.8L4.9 8.7M7.8 9.8H11.3" stroke="#3c3c3c" stroke-width="1.1" fill="none"/></g></svg>
<div class="t" style="left:28.0px;top:323.72px;font-size:12.5px;color:#111;letter-spacing:0.168px">Write Rate</div>
<div class="t" style="right:430.29px;top:323.72px;font-size:12.5px;color:#111;letter-spacing:0.087px">0.000 MB/s</div>
<div class="t" style="right:330.29px;top:323.72px;font-size:12.5px;color:#111;letter-spacing:0.087px">0.000 MB/s</div>
<div class="t" style="right:230.29px;top:323.72px;font-size:12.5px;color:#111;letter-spacing:0.087px">0.000 MB/s</div>
<div class="t" style="right:130.29px;top:323.72px;font-size:12.5px;color:#111;letter-spacing:0.087px">0.000 MB/s</div>
<svg style="left:7.6px;top:340.5px" width="18" height="19" viewBox="0 0 18 19"><g><circle cx="7.8" cy="9.8" r="6.6" fill="#e3e3e7" stroke="url(#ck)" stroke-width="1.9"/><path d="M7.8 9.8L4.9 8.7M7.8 9.8H11.3" stroke="#3c3c3c" stroke-width="1.1" fill="none"/></g></svg>
<div class="t" style="left:28.0px;top:344.72px;font-size:12.5px;color:#111;letter-spacing:0.196px">Read Total</div>
<div class="t" style="right:429.87px;top:344.72px;font-size:12.5px;color:#111;letter-spacing:-0.326px">13 MB</div>
<div class="t" style="right:329.87px;top:344.72px;font-size:12.5px;color:#111;letter-spacing:-0.326px">13 MB</div>
<div class="t" style="right:229.87px;top:344.72px;font-size:12.5px;color:#111;letter-spacing:-0.326px">13 MB</div>
<svg style="left:7.6px;top:361.5px" width="18" height="19" viewBox="0 0 18 19"><g><circle cx="7.8" cy="9.8" r="6.6" fill="#e3e3e7" stroke="url(#ck)" stroke-width="1.9"/><path d="M7.8 9.8L4.9 8.7M7.8 9.8H11.3" stroke="#3c3c3c" stroke-width="1.1" fill="none"/></g></svg>
<div class="t" style="left:28.0px;top:365.72px;font-size:12.5px;color:#111;letter-spacing:0.474px">Write Total</div>
<div class="t" style="right:429.88px;top:365.72px;font-size:12.5px;color:#111;letter-spacing:-0.319px">0 MB</div>
<div class="t" style="right:329.88px;top:365.72px;font-size:12.5px;color:#111;letter-spacing:-0.319px">0 MB</div>
<div class="t" style="right:229.88px;top:365.72px;font-size:12.5px;color:#111;letter-spacing:-0.319px">0 MB</div>
<svg style="left:7.6px;top:403.5px" width="18" height="19" viewBox="0 0 18 19"><g transform="translate(-0.5,0.6)"><rect x="3" y="1" width="11" height="17" rx="1" fill="#454545"/><rect x="4" y="2" width="9" height="15" fill="#545454"/><path d="M1 4.5h2M1 8h2M1 11.5h2M1 15h2M14 4.5h2M14 8h2M14 11.5h2M14 15h2" stroke="#9a9a9a" stroke-width="1.3"/></g></svg>
<div class="t" style="left:29.0px;top:407.72px;font-size:12.5px;font-style:italic;color:#111;letter-spacing:0.249px">GPU [#0]: AM...</div>
<svg style="left:7.6px;top:424.5px" width="18" height="19" viewBox="0 0 18 19"><g><rect x="6.2" y="1.6" width="3" height="12" rx="1.5" fill="#ececec" stroke="#c8c8c8" stroke-width=".7"/><rect x="6.9" y="6" width="1.6" height="9" fill="#d41c24"/><circle cx="7.7" cy="15.2" r="2.7" fill="#d41c24"/></g></svg>
<div class="t" style="left:28.0px;top:428.72px;font-size:12.5px;color:#111;letter-spacing:0.028px">GPU Thermal ...</div>
<div class="t" style="right:430.36px;top:428.72px;font-size:12.5px;color:#111;letter-spacing:0.159px">31 °C</div>
<div class="t" style="right:330.36px;top:428.72px;font-size:12.5px;color:#111;letter-spacing:0.159px">21 °C</div>
<div class="t" style="right:230.36px;top:428.72px;font-size:12.5px;color:#111;letter-spacing:0.159px">31 °C</div>
<div class="t" style="right:130.36px;top:428.72px;font-size:12.5px;color:#111;letter-spacing:0.159px">24 °C</div>
<svg style="left:7.6px;top:445.5px" width="18" height="19" viewBox="0 0 18 19"><g><path d="M4.4 0.4H13L9.6 7.4H12.2L3.4 18.8L5.6 10.2H2.8Z" fill="#f59a1e"/><path d="M5.4 1.2H11L8 7.8L6.4 9.6H4.2Z" fill="#ffd44a"/><path d="M7.4 9.2L10 8.2L5 16Z" fill="#ffc83a"/></g></svg>
<div class="t" style="left:28.0px;top:449.72px;font-size:12.5px;color:#111;letter-spacing:-0.062px">GPU Core Volt...</div>
<div class="t" style="right:430.27px;top:449.72px;font-size:12.5px;color:#111;letter-spacing:0.072px">1.438 V</div>
<div class="t" style="right:330.27px;top:449.72px;font-size:12.5px;color:#111;letter-spacing:0.072px">1.438 V</div>
<div class="t" style="right:230.27px;top:449.72px;font-size:12.5px;color:#111;letter-spacing:0.072px">1.450 V</div>
<div class="t" style="right:130.27px;top:449.72px;font-size:12.5px;color:#111;letter-spacing:0.072px">1.446 V</div>
<svg style="left:7.6px;top:466.5px" width="18" height="19" viewBox="0 0 18 19"><g><path d="M4.4 0.4H13L9.6 7.4H12.2L3.4 18.8L5.6 10.2H2.8Z" fill="#f59a1e"/><path d="M5.4 1.2H11L8 7.8L6.4 9.6H4.2Z" fill="#ffd44a"/><path d="M7.4 9.2L10 8.2L5 16Z" fill="#ffc83a"/></g></svg>
<div class="t" style="left:28.0px;top:470.72px;font-size:12.5px;color:#111;letter-spacing:-0.100px">GPU Memory ...</div>
<div class="t" style="right:430.27px;top:470.72px;font-size:12.5px;color:#111;letter-spacing:0.072px">1.238 V</div>
<div class="t" style="right:330.27px;top:470.72px;font-size:12.5px;color:#111;letter-spacing:0.072px">1.231 V</div>
<div class="t" style="right:230.27px;top:470.72px;font-size:12.5px;color:#111;letter-spacing:0.072px">1.238 V</div>
<div class="t" style="right:130.27px;top:470.72px;font-size:12.5px;color:#111;letter-spacing:0.072px">1.237 V</div>
<svg style="left:7.6px;top:487.5px" width="18" height="19" viewBox="0 0 18 19"><g><circle cx="7.8" cy="9.8" r="6.6" fill="#e3e3e7" stroke="url(#ck)" stroke-width="1.9"/><path d="M7.8 9.8L4.9 8.7M7.8 9.8H11.3" stroke="#3c3c3c" stroke-width="1.1" fill="none"/></g></svg>
<div class="t" style="left:28.0px;top:491.72px;font-size:12.5px;color:#111;letter-spacing:-0.502px">GPU Clock</div>
<div class="t" style="right:430.15px;top:491.72px;font-size:12.5px;color:#111;letter-spacing:-0.052px">1,400.0 MHz</div>
<div class="t" style="right:330.15px;top:491.72px;font-size:12.5px;color:#111;letter-spacing:-0.052px">1,400.0 MHz</div>
<div class="t" style="right:230.15px;top:491.72px;font-size:12.5px;color:#111;letter-spacing:-0.052px">1,400.0 MHz</div>
<div class="t" style="right:130.15px;top:491.72px;font-size:12.5px;color:#111;letter-spacing:-0.052px">1,400.0 MHz</div>
<svg style="left:7.6px;top:508.5px" width="18" height="19" viewBox="0 0 18 19"><g><circle cx="7.8" cy="9.8" r="6.6" fill="#e3e3e7" stroke="url(#ck)" stroke-width="1.9"/><path d="M7.8 9.8L4.9 8.7M7.8 9.8H11.3" stroke="#3c3c3c" stroke-width="1.1" fill="none"/></g></svg>
<div class="t" style="left:28.0px;top:512.72px;font-size:12.5px;color:#111;letter-spacing:-0.100px">GPU Memory ...</div>
<div class="t" style="right:430.15px;top:512.72px;font-size:12.5px;color:#111;letter-spacing:-0.052px">1,600.0 MHz</div>
<div class="t" style="right:330.15px;top:512.72px;font-size:12.5px;color:#111;letter-spacing:-0.052px">1,600.0 MHz</div>
<div class="t" style="right:230.15px;top:512.72px;font-size:12.5px;color:#111;letter-spacing:-0.052px">1,600.0 MHz</div>
<div class="t" style="right:130.15px;top:512.72px;font-size:12.5px;color:#111;letter-spacing:-0.052px">1,600.0 MHz</div>
<svg style="left:7.6px;top:529.5px" width="18" height="19" viewBox="0 0 18 19"><g><circle cx="7.8" cy="9.8" r="6.6" fill="#e3e3e7" stroke="url(#ck)" stroke-width="1.9"/><path d="M7.8 9.8L4.9 8.7M7.8 9.8H11.3" stroke="#3c3c3c" stroke-width="1.1" fill="none"/></g></svg>
<div class="t" style="left:28.0px;top:533.72px;font-size:12.5px;color:#111;letter-spacing:-0.490px">GPU D3D Usage</div>
<div class="t" style="right:430.53px;top:533.72px;font-size:12.5px;color:#111;letter-spacing:0.327px">1.5 %</div>
<div class="t" style="right:330.53px;top:533.72px;font-size:12.5px;color:#111;letter-spacing:0.327px">0.5 %</div>
<div class="t" style="right:230.53px;top:533.72px;font-size:12.5px;color:#111;letter-spacing:0.327px">4.2 %</div>
<div class="t" style="right:130.53px;top:533.72px;font-size:12.5px;color:#111;letter-spacing:0.327px">0.7 %</div>
<svg style="left:7.6px;top:550.5px" width="18" height="19" viewBox="0 0 18 19"><g><circle cx="7.8" cy="9.8" r="6.6" fill="#e3e3e7" stroke="url(#ck)" stroke-width="1.9"/><path d="M7.8 9.8L4.9 8.7M7.8 9.8H11.3" stroke="#3c3c3c" stroke-width="1.1" fill="none"/></g></svg>
<div class="t" style="left:28.0px;top:554.72px;font-size:12.5px;color:#111;letter-spacing:-0.238px">GPU D3D Mem...</div>
<div class="t" style="right:429.94px;top:554.72px;font-size:12.5px;color:#111;letter-spacing:-0.264px">109 MB</div>
<div class="t" style="right:329.94px;top:554.72px;font-size:12.5px;color:#111;letter-spacing:-0.264px">105 MB</div>
<div class="t" style="right:230.09px;top:554.72px;font-size:12.5px;color:#111;letter-spacing:-0.109px">113 MB</div>
<div class="t" style="right:130.09px;top:554.72px;font-size:12.5px;color:#111;letter-spacing:-0.109px">112 MB</div>
<svg style="left:7.6px;top:571.5px" width="18" height="19" viewBox="0 0 18 19"><g><circle cx="7.8" cy="9.8" r="6.6" fill="#e3e3e7" stroke="url(#ck)" stroke-width="1.9"/><path d="M7.8 9.8L4.9 8.7M7.8 9.8H11.3" stroke="#3c3c3c" stroke-width="1.1" fill="none"/></g></svg>
<div class="t" style="left:28.0px;top:575.72px;font-size:12.5px;color:#111;letter-spacing:-0.238px">GPU D3D Mem...</div>
<div class="t" style="right:429.94px;top:575.72px;font-size:12.5px;color:#111;letter-spacing:-0.264px">164 MB</div>
<div class="t" style="right:329.94px;top:575.72px;font-size:12.5px;color:#111;letter-spacing:-0.264px">163 MB</div>
<div class="t" style="right:229.94px;top:575.72px;font-size:12.5px;color:#111;letter-spacing:-0.264px">196 MB</div>
<div class="t" style="right:129.94px;top:575.72px;font-size:12.5px;color:#111;letter-spacing:-0.264px">165 MB</div>
<svg style="left:7.6px;top:592.5px" width="18" height="19" viewBox="0 0 18 19"><g><circle cx="7.8" cy="9.8" r="6.6" fill="#e3e3e7" stroke="url(#ck)" stroke-width="1.9"/><path d="M7.8 9.8L4.9 8.7M7.8 9.8H11.3" stroke="#3c3c3c" stroke-width="1.1" fill="none"/></g></svg>
<div class="t" style="left:28.0px;top:596.72px;font-size:12.5px;color:#111;letter-spacing:-0.128px">PCIe Link Speed</div>
<div class="t" style="right:430.35px;top:596.72px;font-size:12.5px;color:#111;letter-spacing:0.146px">8.0 GT/s</div>
<div class="t" style="right:330.35px;top:596.72px;font-size:12.5px;color:#111;letter-spacing:0.146px">8.0 GT/s</div>
<div class="t" style="right:230.35px;top:596.72px;font-size:12.5px;color:#111;letter-spacing:0.146px">8.0 GT/s</div>
<div class="t" style="right:130.35px;top:596.72px;font-size:12.5px;color:#111;letter-spacing:0.146px">8.0 GT/s</div>
<svg style="left:7.6px;top:634.5px" width="18" height="19" viewBox="0 0 18 19"><g transform="translate(-0.5,0.6)"><rect x="3" y="1" width="11" height="17" rx="1" fill="#454545"/><rect x="4" y="2" width="9" height="15" fill="#545454"/><path d="M1 4.5h2M1 8h2M1 11.5h2M1 15h2M14 4.5h2M14 8h2M14 11.5h2M14 15h2" stroke="#9a9a9a" stroke-width="1.3"/></g></svg>
<div class="t" style="left:29.0px;top:638.72px;font-size:12.5px;font-style:italic;color:#111;letter-spacing:0.321px">Network: Intel...</div>
<svg style="left:7.6px;top:655.5px" width="18" height="19" viewBox="0 0 18 19"><g><circle cx="7.8" cy="9.8" r="6.6" fill="#e3e3e7" stroke="url(#ck)" stroke-width="1.9"/><path d="M7.8 9.8L4.9 8.7M7.8 9.8H11.3" stroke="#3c3c3c" stroke-width="1.1" fill="none"/></g></svg>
<div class="t" style="left:28.0px;top:659.72px;font-size:12.5px;color:#111;letter-spacing:0.105px">Total DL</div>
<div class="t" style="right:429.88px;top:659.72px;font-size:12.5px;color:#111;letter-spacing:-0.319px">0 MB</div>
<div class="t" style="right:329.88px;top:659.72px;font-size:12.5px;color:#111;letter-spacing:-0.319px">0 MB</div>
<div class="t" style="right:229.88px;top:659.72px;font-size:12.5px;color:#111;letter-spacing:-0.319px">0 MB</div>
<svg style="left:7.6px;top:676.5px" width="18" height="19" viewBox="0 0 18 19"><g><circle cx="7.8" cy="9.8" r="6.6" fill="#e3e3e7" stroke="url(#ck)" stroke-width="1.9"/><path d="M7.8 9.8L4.9 8.7M7.8 9.8H11.3" stroke="#3c3c3c" stroke-width="1.1" fill="none"/></g></svg>
<div class="t" style="left:28.0px;top:680.72px;font-size:12.5px;color:#111;letter-spacing:0.082px">Total UP</div>
<div class="t" style="right:429.88px;top:680.72px;font-size:12.5px;color:#111;letter-spacing:-0.319px">0 MB</div>
<div class="t" style="right:329.88px;top:680.72px;font-size:12.5px;color:#111;letter-spacing:-0.319px">0 MB</div>
<div class="t" style="right:229.88px;top:680.72px;font-size:12.5px;color:#111;letter-spacing:-0.319px">0 MB</div>
<svg style="left:7.6px;top:697.5px" width="18" height="19" viewBox="0 0 18 19"><g><circle cx="7.8" cy="9.8" r="6.6" fill="#e3e3e7" stroke="url(#ck)" stroke-width="1.9"/><path d="M7.8 9.8L4.9 8.7M7.8 9.8H11.3" stroke="#3c3c3c" stroke-width="1.1" fill="none"/></g></svg>
<div class="t" style="left:28.0px;top:701.72px;font-size:12.5px;color:#111;letter-spacing:0.154px">Current DL rate</div>
<div class="t" style="right:430.17px;top:701.72px;font-size:12.5px;color:#111;letter-spacing:-0.025px">0.000 KB/s</div>
<div class="t" style="right:330.17px;top:701.72px;font-size:12.5px;color:#111;letter-spacing:-0.025px">0.000 KB/s</div>
<div class="t" style="right:230.17px;top:701.72px;font-size:12.5px;color:#111;letter-spacing:-0.025px">0.000 KB/s</div>
<div class="t" style="right:130.17px;top:701.72px;font-size:12.5px;color:#111;letter-spacing:-0.025px">0.000 KB/s</div>
<svg style="left:7.6px;top:718.5px" width="18" height="19" viewBox="0 0 18 19"><g><circle cx="7.8" cy="9.8" r="6.6" fill="#e3e3e7" stroke="url(#ck)" stroke-width="1.9"/><path d="M7.8 9.8L4.9 8.7M7.8 9.8H11.3" stroke="#3c3c3c" stroke-width="1.1" fill="none"/></g></svg>
<div class="t" style="left:28.0px;top:722.72px;font-size:12.5px;color:#111;letter-spacing:0.099px">Current UP rate</div>
<div class="t" style="right:430.17px;top:722.72px;font-size:12.5px;color:#111;letter-spacing:-0.025px">0.000 KB/s</div>
<div class="t" style="right:330.17px;top:722.72px;font-size:12.5px;color:#111;letter-spacing:-0.025px">0.000 KB/s</div>
<div class="t" style="right:230.17px;top:722.72px;font-size:12.5px;color:#111;letter-spacing:-0.025px">0.000 KB/s</div>
<div class="t" style="right:130.17px;top:722.72px;font-size:12.5px;color:#111;letter-spacing:-0.025px">0.000 KB/s</div>
<svg style="left:7.6px;top:760.5px" width="18" height="19" viewBox="0 0 18 19"><g transform="translate(-0.5,0.6)"><rect x="3" y="1" width="11" height="17" rx="1" fill="#454545"/><rect x="4" y="2" width="9" height="15" fill="#545454"/><path d="M1 4.5h2M1 8h2M1 11.5h2M1 15h2M14 4.5h2M14 8h2M14 11.5h2M14 15h2" stroke="#9a9a9a" stroke-width="1.3"/></g></svg>
<div class="t" style="left:29.0px;top:764.72px;font-size:12.5px;font-style:italic;color:#111;letter-spacing:0.211px">Network: Real...</div>
<svg style="left:7.6px;top:781.5px" width="18" height="19" viewBox="0 0 18 19"><g><circle cx="7.8" cy="9.8" r="6.6" fill="#e3e3e7" stroke="url(#ck)" stroke-width="1.9"/><path d="M7.8 9.8L4.9 8.7M7.8 9.8H11.3" stroke="#3c3c3c" stroke-width="1.1" fill="none"/></g></svg>
<div class="t" style="left:28.0px;top:785.72px;font-size:12.5px;color:#111;letter-spacing:0.105px">Total DL</div>
<div class="t" style="right:429.88px;top:785.72px;font-size:12.5px;color:#111;letter-spacing:-0.319px">0 MB</div>
<div class="t" style="right:329.88px;top:785.72px;font-size:12.5px;color:#111;letter-spacing:-0.319px">0 MB</div>
<div class="t" style="right:229.88px;top:785.72px;font-size:12.5px;color:#111;letter-spacing:-0.319px">0 MB</div>
<svg style="left:7.6px;top:802.5px" width="18" height="19" viewBox="0 0 18 19"><g><circle cx="7.8" cy="9.8" r="6.6" fill="#e3e3e7" stroke="url(#ck)" stroke-width="1.9"/><path d="M7.8 9.8L4.9 8.7M7.8 9.8H11.3" stroke="#3c3c3c" stroke-width="1.1" fill="none"/></g></svg>
<div class="t" style="left:28.0px;top:806.72px;font-size:12.5px;color:#111;letter-spacing:0.082px">Total UP</div>
<div class="t" style="right:429.88px;top:806.72px;font-size:12.5px;color:#111;letter-spacing:-0.319px">0 MB</div>
<div class="t" style="right:329.88px;top:806.72px;font-size:12.5px;color:#111;letter-spacing:-0.319px">0 MB</div>
<div class="t" style="right:229.88px;top:806.72px;font-size:12.5px;color:#111;letter-spacing:-0.319px">0 MB</div>
</div>
<div class="a" style="left:630px;top:41px;width:20px;height:812px;background:#f0f0f0;"></div>
<div class="a" style="left:630px;top:616px;width:19px;height:161.2px;background:#cdcdcd;"></div>
<svg style="left:630px;top:41px" width="21" height="812"><g fill="none" stroke="#555" stroke-width="1.8"><path d="M5 14.6L9.5 10.1L14 14.6"/><path d="M5 798.4L9.5 802.9L14 798.4"/></g></svg>
<div class="a" style="left:1.4px;top:853px;width:650px;height:67px;background:#f0f0f0;"></div>
<div class="a" style="left:1.4px;top:852.8px;width:650px;height:1px;background:#6e6e6e;"></div>
<div class="a" style="left:2.3px;top:863.3px;width:48.200000000000045px;height:43.4px;background:#e1e1e1;border:1px solid #adadad"></div>
<div class="a" style="left:53.6px;top:863.3px;width:48.0px;height:43.4px;background:#cccccc;border:1px solid #c4c4c4"></div>
<div class="a" style="left:301px;top:863.3px;width:48.59999999999991px;height:43.4px;background:#e1e1e1;border:1px solid #adadad"></div>
<div class="a" style="left:430px;top:863.3px;width:48.59999999999991px;height:43.4px;background:#e1e1e1;border:1px solid #adadad"></div>
<div class="a" style="left:483px;top:863.3px;width:48.69999999999982px;height:43.4px;background:#e1e1e1;border:1px solid #adadad"></div>
<div class="a" style="left:537px;top:863.3px;width:48.5px;height:43.4px;background:#e1e1e1;border:1px solid #adadad"></div>
<div class="a" style="left:591px;top:863.3px;width:48.80000000000018px;height:43.4px;background:#e3eefa;border:2px solid #1a72c4"></div>
<svg style="left:2.3px;top:863.3px" width="48" height="43" viewBox="0 0 48 43"><path d="M3.6 23.1l9 -10.5v5.7h9v9.6h-9v5.7z" fill="#2f8fe8" stroke="#1f6fc8" stroke-width=".8"/><path d="M43.6 23.1l-9 -10.5v5.7h-9v9.6h9v5.7z" fill="#2f8fe8" stroke="#1f6fc8" stroke-width=".8"/></svg>
<svg style="left:53.6px;top:863.3px" width="48" height="43" viewBox="0 0 48 43"><path d="M22.6 23.1l-9 -10.5v5.7h-9v9.6h9v5.7z" fill="#6fb0e8" opacity=".85"/><path d="M24.6 23.1l9 -10.5v5.7h9v9.6h-9v5.7z" fill="#6fb0e8" opacity=".85"/></svg>
<svg style="left:301.0px;top:863.3px" width="48" height="43" viewBox="0 0 48 43"><path d="M26 12h9v10" fill="none" stroke="#9a9a9a" stroke-width="1.4"/><g transform="translate(4.5,1.5) scale(1.3,1.1)"><path d="M2 1L17 3.5L15.5 15.5L0.5 12Z" fill="#1f6fd0"/><path d="M3 2.3L16 4.4L15.4 9C10 6 6 7 2 9.8Z" fill="#6fc0ff"/><path d="M5 14l1 3.5h6l.6-2.2" fill="#c0c4c8"/><ellipse cx="9" cy="18.6" rx="6.5" ry="2.2" fill="#a8acb0"/></g><g transform="translate(22.5,18.5) scale(1.3,1.1)"><path d="M2 1L17 3.5L15.5 15.5L0.5 12Z" fill="#1f6fd0"/><path d="M3 2.3L16 4.4L15.4 9C10 6 6 7 2 9.8Z" fill="#6fc0ff"/><path d="M5 14l1 3.5h6l.6-2.2" fill="#c0c4c8"/><ellipse cx="9" cy="18.6" rx="6.5" ry="2.2" fill="#a8acb0"/></g></svg>
<div class="t " style="left:379.3px;top:877.22px;font-size:12.5px;color:#111;letter-spacing:0.327px">0:03:49</div>
<svg style="left:430.0px;top:863.3px" width="48" height="43" viewBox="0 0 48 43"><circle cx="24" cy="21.5" r="19" fill="#fff" stroke="#111" stroke-width="1.6"/><path d="M24.0 6.0L24.0 3.0" stroke="#111" stroke-width="2.2"/><path d="M31.8 8.1L33.2 5.5" stroke="#111" stroke-width="1.5"/><path d="M37.4 13.7L40.0 12.2" stroke="#111" stroke-width="1.5"/><path d="M39.5 21.5L42.5 21.5" stroke="#111" stroke-width="2.2"/><path d="M37.4 29.2L40.0 30.7" stroke="#111" stroke-width="1.5"/><path d="M31.8 34.9L33.2 37.5" stroke="#111" stroke-width="1.5"/><path d="M24.0 37.0L24.0 40.0" stroke="#111" stroke-width="2.2"/><path d="M16.3 34.9L14.8 37.5" stroke="#111" stroke-width="1.5"/><path d="M10.6 29.3L8.0 30.8" stroke="#111" stroke-width="1.5"/><path d="M8.5 21.5L5.5 21.5" stroke="#111" stroke-width="2.2"/><path d="M10.6 13.7L8.0 12.2" stroke="#111" stroke-width="1.5"/><path d="M16.2 8.1L14.7 5.5" stroke="#111" stroke-width="1.5"/><path d="M24.6 4.5L24 21.5" fill="none" stroke="#111" stroke-width="1.6"/><path d="M23 21.5H34" fill="none" stroke="#111" stroke-width="2.6"/></svg>
<svg style="left:483.0px;top:863.3px" width="48" height="43" viewBox="0 0 48 43"><path d="M8 37.5H41" stroke="#cfcfcf" stroke-width="2"/><path d="M11 3H31L39 11V36.5H11Z" fill="#f8f8f8" stroke="#c4c4c4"/><path d="M31 3V11H39Z" fill="#e0e0e0" stroke="#c4c4c4"/><path d="M14 9H29M14 13H36M14 17H36M14 21H36M14 25H36M14 29H28M14 33H27M20 8V34M27 8V34M33 12V26" stroke="#d6dcd6" stroke-width="1"/><path d="M33.2 24.2h5.4v4.8h5v5.4h-5v4.8h-5.4v-4.8h-5v-5.4h5z" fill="#a6d24c" stroke="#8cba30" stroke-width=".8"/></svg>
<svg width="0" height="0" style="left:0;top:0"><defs><linearGradient id="gg" x1="0" y1="0" x2="1" y2="1"><stop offset="0" stop-color="#e4e7e8"/><stop offset=".55" stop-color="#c2c6c8"/><stop offset="1" stop-color="#8e9496"/></linearGradient><linearGradient id="gx" x1="0" y1="0" x2="0" y2="1"><stop offset="0" stop-color="#2486d2"/><stop offset="1" stop-color="#58b4f2"/></linearGradient></defs></svg>
<svg style="left:537.0px;top:863.3px" width="48" height="43" viewBox="0 0 48 43"><g transform="translate(23.8,21.6)"><rect x="-4.2" y="-19" width="8.4" height="9" rx="1.8" transform="rotate(8)" fill="#bcc0c2" stroke="#8d9295" stroke-width=".7"/><rect x="-4.2" y="-19" width="8.4" height="9" rx="1.8" transform="rotate(53)" fill="#bcc0c2" stroke="#8d9295" stroke-width=".7"/><rect x="-4.2" y="-19" width="8.4" height="9" rx="1.8" transform="rotate(98)" fill="#bcc0c2" stroke="#8d9295" stroke-width=".7"/><rect x="-4.2" y="-19" width="8.4" height="9" rx="1.8" transform="rotate(143)" fill="#bcc0c2" stroke="#8d9295" stroke-width=".7"/><rect x="-4.2" y="-19" width="8.4" height="9" rx="1.8" transform="rotate(188)" fill="#bcc0c2" stroke="#8d9295" stroke-width=".7"/><rect x="-4.2" y="-19" width="8.4" height="9" rx="1.8" transform="rotate(233)" fill="#bcc0c2" stroke="#8d9295" stroke-width=".7"/><rect x="-4.2" y="-19" width="8.4" height="9" rx="1.8" transform="rotate(278)" fill="#bcc0c2" stroke="#8d9295" stroke-width=".7"/><rect x="-4.2" y="-19" width="8.4" height="9" rx="1.8" transform="rotate(323)" fill="#bcc0c2" stroke="#8d9295" stroke-width=".7"/><circle r="14.2" fill="url(#gg)" stroke="#9a9fa2" stroke-width=".6"/><circle r="11" fill="none" stroke="#e4e6e7" stroke-width="2"/><circle r="8" fill="#e1e1e1" stroke="#8d9295" stroke-width="1.6"/></g></svg>
<svg style="left:591.0px;top:863.3px" width="48" height="43" viewBox="0 0 48 43"><g transform="translate(23.8,22.3)"><rect x="-15.5" y="-4.4" width="31" height="8.8" rx="1" transform="rotate(45)" fill="#3a98e0"/><rect x="-15.5" y="-4.4" width="31" height="8.8" rx="1" transform="rotate(-45)" fill="#3a98e0"/><rect x="-14" y="-2.6" width="28" height="3.4" transform="rotate(-45)" fill="#5cb6f2" opacity=".55"/></g></svg>
<div class="a" style="left:0px;top:919.3px;width:651px;height:3px;background:#1c5288;"></div>
</div>
</body></html>
